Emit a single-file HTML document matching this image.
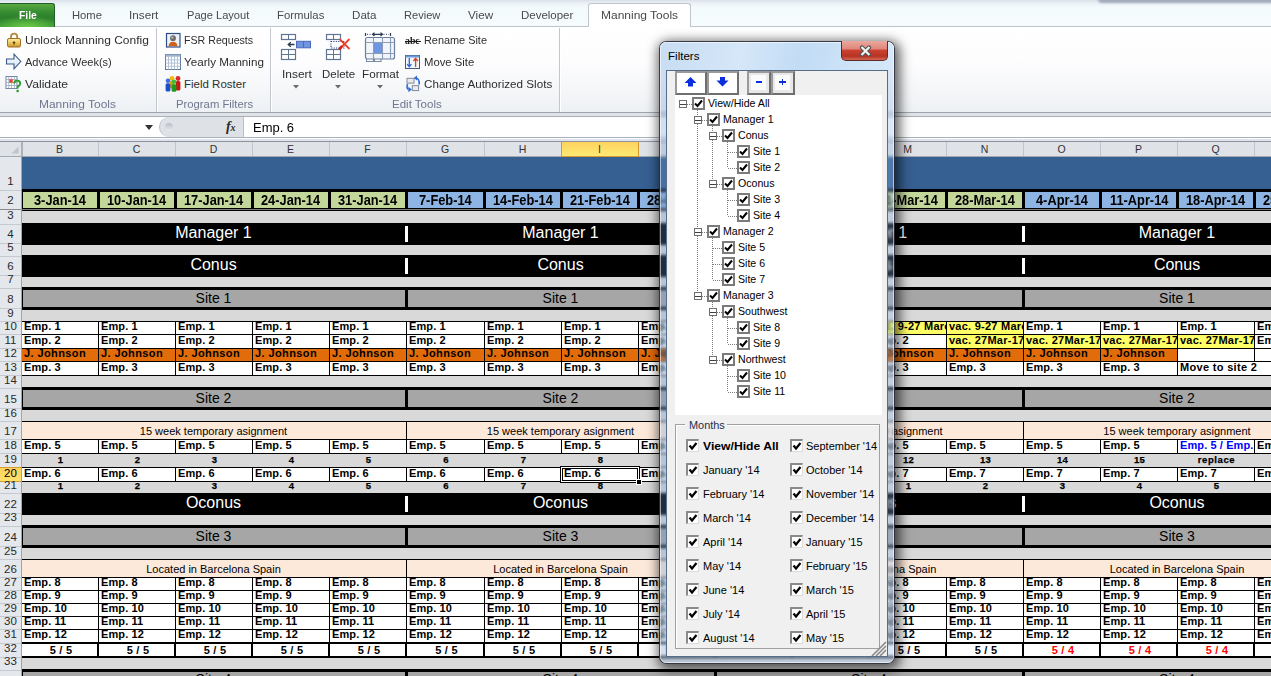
<!DOCTYPE html><html><head><meta charset="utf-8"><style>
html,body{margin:0;padding:0;width:1271px;height:676px;overflow:hidden;background:#fff;}
body{position:relative;font-family:"Liberation Sans", sans-serif;}
div{position:absolute;box-sizing:border-box;}
svg{position:absolute;}
</style></head><body>
<div style="left:22px;top:157px;width:1249px;height:32px;background:#366092;"></div>
<div style="left:22px;top:189px;width:1249px;height:22px;background:#000;"></div>
<div style="left:23px;top:192px;width:74px;height:16px;background:#c4d79b;"></div>
<div style="left:33.80828124999999px;top:192.10px;font-size:14px;line-height:16.1px;font-weight:700;color:#000;white-space:pre;transform:scaleX(0.9150);transform-origin:0 0;">3-Jan-14</div>
<div style="left:100px;top:192px;width:74px;height:16px;background:#c4d79b;"></div>
<div style="left:107.248359375px;top:192.10px;font-size:14px;line-height:16.1px;font-weight:700;color:#000;white-space:pre;transform:scaleX(0.9150);transform-origin:0 0;">10-Jan-14</div>
<div style="left:177px;top:192px;width:74px;height:16px;background:#c4d79b;"></div>
<div style="left:184.248359375px;top:192.10px;font-size:14px;line-height:16.1px;font-weight:700;color:#000;white-space:pre;transform:scaleX(0.9150);transform-origin:0 0;">17-Jan-14</div>
<div style="left:254px;top:192px;width:74px;height:16px;background:#c4d79b;"></div>
<div style="left:261.248359375px;top:192.10px;font-size:14px;line-height:16.1px;font-weight:700;color:#000;white-space:pre;transform:scaleX(0.9150);transform-origin:0 0;">24-Jan-14</div>
<div style="left:331px;top:192px;width:74px;height:16px;background:#c4d79b;"></div>
<div style="left:338.248359375px;top:192.10px;font-size:14px;line-height:16.1px;font-weight:700;color:#000;white-space:pre;transform:scaleX(0.9150);transform-origin:0 0;">31-Jan-14</div>
<div style="left:408px;top:192px;width:75px;height:16px;background:#8db4e2;"></div>
<div style="left:418.9580078125px;top:192.10px;font-size:14px;line-height:16.1px;font-weight:700;color:#000;white-space:pre;transform:scaleX(0.9150);transform-origin:0 0;">7-Feb-14</div>
<div style="left:486px;top:192px;width:74px;height:16px;background:#8db4e2;"></div>
<div style="left:492.89808593749996px;top:192.10px;font-size:14px;line-height:16.1px;font-weight:700;color:#000;white-space:pre;transform:scaleX(0.9150);transform-origin:0 0;">14-Feb-14</div>
<div style="left:563px;top:192px;width:74px;height:16px;background:#8db4e2;"></div>
<div style="left:569.8980859374999px;top:192.10px;font-size:14px;line-height:16.1px;font-weight:700;color:#000;white-space:pre;transform:scaleX(0.9150);transform-origin:0 0;">21-Feb-14</div>
<div style="left:640px;top:192px;width:74px;height:16px;background:#8db4e2;"></div>
<div style="left:646.8980859374999px;top:192.10px;font-size:14px;line-height:16.1px;font-weight:700;color:#000;white-space:pre;transform:scaleX(0.9150);transform-origin:0 0;">28-Feb-14</div>
<div style="left:717px;top:192px;width:74px;height:16px;background:#c4d79b;"></div>
<div style="left:727.4508593749999px;top:192.10px;font-size:14px;line-height:16.1px;font-weight:700;color:#000;white-space:pre;transform:scaleX(0.9150);transform-origin:0 0;">7-Mar-14</div>
<div style="left:794px;top:192px;width:74px;height:16px;background:#c4d79b;"></div>
<div style="left:800.8909375px;top:192.10px;font-size:14px;line-height:16.1px;font-weight:700;color:#000;white-space:pre;transform:scaleX(0.9150);transform-origin:0 0;">14-Mar-14</div>
<div style="left:871px;top:192px;width:74px;height:16px;background:#c4d79b;"></div>
<div style="left:877.8909375px;top:192.10px;font-size:14px;line-height:16.1px;font-weight:700;color:#000;white-space:pre;transform:scaleX(0.9150);transform-origin:0 0;">21-Mar-14</div>
<div style="left:948px;top:192px;width:74px;height:16px;background:#c4d79b;"></div>
<div style="left:954.8909375px;top:192.10px;font-size:14px;line-height:16.1px;font-weight:700;color:#000;white-space:pre;transform:scaleX(0.9150);transform-origin:0 0;">28-Mar-14</div>
<div style="left:1025px;top:192px;width:74px;height:16px;background:#8db4e2;"></div>
<div style="left:1035.8154296875px;top:192.10px;font-size:14px;line-height:16.1px;font-weight:700;color:#000;white-space:pre;transform:scaleX(0.9150);transform-origin:0 0;">4-Apr-14</div>
<div style="left:1102px;top:192px;width:74px;height:16px;background:#8db4e2;"></div>
<div style="left:1109.60578125px;top:192.10px;font-size:14px;line-height:16.1px;font-weight:700;color:#000;white-space:pre;transform:scaleX(0.9150);transform-origin:0 0;">11-Apr-14</div>
<div style="left:1179px;top:192px;width:74px;height:16px;background:#8db4e2;"></div>
<div style="left:1186.248359375px;top:192.10px;font-size:14px;line-height:16.1px;font-weight:700;color:#000;white-space:pre;transform:scaleX(0.9150);transform-origin:0 0;">18-Apr-14</div>
<div style="left:1256px;top:192px;width:74px;height:16px;background:#8db4e2;"></div>
<div style="left:1263.248359375px;top:192.10px;font-size:14px;line-height:16.1px;font-weight:700;color:#000;white-space:pre;transform:scaleX(0.9150);transform-origin:0 0;">25-Apr-14</div>
<div style="left:0px;top:209px;width:1271px;height:1px;background:#7a7a7a;"></div>
<div style="left:22px;top:211px;width:1249px;height:12px;background:#d9d9d9;"></div>
<div style="left:22px;top:245px;width:1249px;height:10px;background:#d9d9d9;"></div>
<div style="left:22px;top:277px;width:1249px;height:10px;background:#d9d9d9;"></div>
<div style="left:22px;top:310px;width:1249px;height:11px;background:#d9d9d9;"></div>
<div style="left:22px;top:375px;width:1249px;height:12px;background:#d9d9d9;"></div>
<div style="left:22px;top:410px;width:1249px;height:11px;background:#d9d9d9;"></div>
<div style="left:22px;top:453px;width:1249px;height:14px;background:#d9d9d9;"></div>
<div style="left:22px;top:482px;width:1249px;height:11px;background:#d9d9d9;"></div>
<div style="left:22px;top:515px;width:1249px;height:10px;background:#d9d9d9;"></div>
<div style="left:22px;top:548px;width:1249px;height:11px;background:#d9d9d9;"></div>
<div style="left:22px;top:658px;width:1249px;height:11px;background:#d9d9d9;"></div>
<div style="left:22px;top:223px;width:1249px;height:22px;background:#000;"></div>
<div style="left:21px;top:224.26px;font-size:16px;line-height:18.4px;font-weight:400;color:#fff;white-space:pre;width:385px;text-align:center;">Manager 1</div>
<div style="left:406px;top:224.26px;font-size:16px;line-height:18.4px;font-weight:400;color:#fff;white-space:pre;width:309px;text-align:center;">Manager 1</div>
<div style="left:405px;top:226px;width:3px;height:16px;background:#fff;"></div>
<div style="left:715px;top:224.26px;font-size:16px;line-height:18.4px;font-weight:400;color:#fff;white-space:pre;width:308px;text-align:center;">Manager 1</div>
<div style="left:714px;top:226px;width:3px;height:16px;background:#fff;"></div>
<div style="left:1023px;top:224.26px;font-size:16px;line-height:18.4px;font-weight:400;color:#fff;white-space:pre;width:308px;text-align:center;">Manager 1</div>
<div style="left:1022px;top:226px;width:3px;height:16px;background:#fff;"></div>
<div style="left:22px;top:255px;width:1249px;height:22px;background:#000;"></div>
<div style="left:21px;top:256.26px;font-size:16px;line-height:18.4px;font-weight:400;color:#fff;white-space:pre;width:385px;text-align:center;">Conus</div>
<div style="left:406px;top:256.26px;font-size:16px;line-height:18.4px;font-weight:400;color:#fff;white-space:pre;width:309px;text-align:center;">Conus</div>
<div style="left:405px;top:258px;width:3px;height:16px;background:#fff;"></div>
<div style="left:715px;top:256.26px;font-size:16px;line-height:18.4px;font-weight:400;color:#fff;white-space:pre;width:308px;text-align:center;">Conus</div>
<div style="left:714px;top:258px;width:3px;height:16px;background:#fff;"></div>
<div style="left:1023px;top:256.26px;font-size:16px;line-height:18.4px;font-weight:400;color:#fff;white-space:pre;width:308px;text-align:center;">Conus</div>
<div style="left:1022px;top:258px;width:3px;height:16px;background:#fff;"></div>
<div style="left:22px;top:493px;width:1249px;height:22px;background:#000;"></div>
<div style="left:21px;top:494.26px;font-size:16px;line-height:18.4px;font-weight:400;color:#fff;white-space:pre;width:385px;text-align:center;">Oconus</div>
<div style="left:406px;top:494.26px;font-size:16px;line-height:18.4px;font-weight:400;color:#fff;white-space:pre;width:309px;text-align:center;">Oconus</div>
<div style="left:405px;top:496px;width:3px;height:16px;background:#fff;"></div>
<div style="left:715px;top:494.26px;font-size:16px;line-height:18.4px;font-weight:400;color:#fff;white-space:pre;width:308px;text-align:center;">Oconus</div>
<div style="left:714px;top:496px;width:3px;height:16px;background:#fff;"></div>
<div style="left:1023px;top:494.26px;font-size:16px;line-height:18.4px;font-weight:400;color:#fff;white-space:pre;width:308px;text-align:center;">Oconus</div>
<div style="left:1022px;top:496px;width:3px;height:16px;background:#fff;"></div>
<div style="left:22px;top:287px;width:1249px;height:23px;background:#000;"></div>
<div style="left:23px;top:290px;width:382px;height:17px;background:#a6a6a6;"></div>
<div style="left:21px;top:290.10px;font-size:14px;line-height:16.1px;font-weight:400;color:#000;white-space:pre;width:385px;text-align:center;">Site 1</div>
<div style="left:408px;top:290px;width:306px;height:17px;background:#a6a6a6;"></div>
<div style="left:406px;top:290.10px;font-size:14px;line-height:16.1px;font-weight:400;color:#000;white-space:pre;width:309px;text-align:center;">Site 1</div>
<div style="left:717px;top:290px;width:305px;height:17px;background:#a6a6a6;"></div>
<div style="left:715px;top:290.10px;font-size:14px;line-height:16.1px;font-weight:400;color:#000;white-space:pre;width:308px;text-align:center;">Site 1</div>
<div style="left:1025px;top:290px;width:305px;height:17px;background:#a6a6a6;"></div>
<div style="left:1023px;top:290.10px;font-size:14px;line-height:16.1px;font-weight:400;color:#000;white-space:pre;width:308px;text-align:center;">Site 1</div>
<div style="left:22px;top:387px;width:1249px;height:23px;background:#000;"></div>
<div style="left:23px;top:390px;width:382px;height:17px;background:#a6a6a6;"></div>
<div style="left:21px;top:390.10px;font-size:14px;line-height:16.1px;font-weight:400;color:#000;white-space:pre;width:385px;text-align:center;">Site 2</div>
<div style="left:408px;top:390px;width:306px;height:17px;background:#a6a6a6;"></div>
<div style="left:406px;top:390.10px;font-size:14px;line-height:16.1px;font-weight:400;color:#000;white-space:pre;width:309px;text-align:center;">Site 2</div>
<div style="left:717px;top:390px;width:305px;height:17px;background:#a6a6a6;"></div>
<div style="left:715px;top:390.10px;font-size:14px;line-height:16.1px;font-weight:400;color:#000;white-space:pre;width:308px;text-align:center;">Site 2</div>
<div style="left:1025px;top:390px;width:305px;height:17px;background:#a6a6a6;"></div>
<div style="left:1023px;top:390.10px;font-size:14px;line-height:16.1px;font-weight:400;color:#000;white-space:pre;width:308px;text-align:center;">Site 2</div>
<div style="left:22px;top:525px;width:1249px;height:23px;background:#000;"></div>
<div style="left:23px;top:528px;width:382px;height:17px;background:#a6a6a6;"></div>
<div style="left:21px;top:528.10px;font-size:14px;line-height:16.1px;font-weight:400;color:#000;white-space:pre;width:385px;text-align:center;">Site 3</div>
<div style="left:408px;top:528px;width:306px;height:17px;background:#a6a6a6;"></div>
<div style="left:406px;top:528.10px;font-size:14px;line-height:16.1px;font-weight:400;color:#000;white-space:pre;width:309px;text-align:center;">Site 3</div>
<div style="left:717px;top:528px;width:305px;height:17px;background:#a6a6a6;"></div>
<div style="left:715px;top:528.10px;font-size:14px;line-height:16.1px;font-weight:400;color:#000;white-space:pre;width:308px;text-align:center;">Site 3</div>
<div style="left:1025px;top:528px;width:305px;height:17px;background:#a6a6a6;"></div>
<div style="left:1023px;top:528.10px;font-size:14px;line-height:16.1px;font-weight:400;color:#000;white-space:pre;width:308px;text-align:center;">Site 3</div>
<div style="left:22px;top:669px;width:1249px;height:23px;background:#000;"></div>
<div style="left:23px;top:672px;width:382px;height:17px;background:#a6a6a6;"></div>
<div style="left:21px;top:671.10px;font-size:14px;line-height:16.1px;font-weight:400;color:#000;white-space:pre;width:385px;text-align:center;">Site 4</div>
<div style="left:408px;top:672px;width:306px;height:17px;background:#a6a6a6;"></div>
<div style="left:406px;top:671.10px;font-size:14px;line-height:16.1px;font-weight:400;color:#000;white-space:pre;width:309px;text-align:center;">Site 4</div>
<div style="left:717px;top:672px;width:305px;height:17px;background:#a6a6a6;"></div>
<div style="left:715px;top:671.10px;font-size:14px;line-height:16.1px;font-weight:400;color:#000;white-space:pre;width:308px;text-align:center;">Site 4</div>
<div style="left:1025px;top:672px;width:305px;height:17px;background:#a6a6a6;"></div>
<div style="left:1023px;top:671.10px;font-size:14px;line-height:16.1px;font-weight:400;color:#000;white-space:pre;width:308px;text-align:center;">Site 4</div>
<div style="left:22px;top:421px;width:1249px;height:19px;background:#000;"></div>
<div style="left:22px;top:422px;width:384px;height:17px;background:#fde9d9;"></div>
<div style="left:21px;top:424.86px;font-size:11px;line-height:12.65px;font-weight:400;color:#000;white-space:pre;width:385px;text-align:center;">15 week temporary asignment</div>
<div style="left:407px;top:422px;width:308px;height:17px;background:#fde9d9;"></div>
<div style="left:406px;top:424.86px;font-size:11px;line-height:12.65px;font-weight:400;color:#000;white-space:pre;width:309px;text-align:center;">15 week temporary asignment</div>
<div style="left:716px;top:422px;width:307px;height:17px;background:#fde9d9;"></div>
<div style="left:715px;top:424.86px;font-size:11px;line-height:12.65px;font-weight:400;color:#000;white-space:pre;width:308px;text-align:center;">15 week temporary asignment</div>
<div style="left:1024px;top:422px;width:307px;height:17px;background:#fde9d9;"></div>
<div style="left:1023px;top:424.86px;font-size:11px;line-height:12.65px;font-weight:400;color:#000;white-space:pre;width:308px;text-align:center;">15 week temporary asignment</div>
<div style="left:22px;top:559px;width:1249px;height:19px;background:#000;"></div>
<div style="left:22px;top:560px;width:384px;height:17px;background:#fde9d9;"></div>
<div style="left:21px;top:562.86px;font-size:11px;line-height:12.65px;font-weight:400;color:#000;white-space:pre;width:385px;text-align:center;">Located in Barcelona Spain</div>
<div style="left:407px;top:560px;width:308px;height:17px;background:#fde9d9;"></div>
<div style="left:406px;top:562.86px;font-size:11px;line-height:12.65px;font-weight:400;color:#000;white-space:pre;width:309px;text-align:center;">Located in Barcelona Spain</div>
<div style="left:716px;top:560px;width:307px;height:17px;background:#fde9d9;"></div>
<div style="left:715px;top:562.86px;font-size:11px;line-height:12.65px;font-weight:400;color:#000;white-space:pre;width:308px;text-align:center;">Located in Barcelona Spain</div>
<div style="left:1024px;top:560px;width:307px;height:17px;background:#fde9d9;"></div>
<div style="left:1023px;top:562.86px;font-size:11px;line-height:12.65px;font-weight:400;color:#000;white-space:pre;width:308px;text-align:center;">Located in Barcelona Spain</div>
<div style="left:21px;top:321px;width:1250px;height:55px;background:#000;"></div>
<div style="left:22px;top:322px;width:76px;height:12px;background:#fff;"></div>
<div style="left:99px;top:322px;width:76px;height:12px;background:#fff;"></div>
<div style="left:176px;top:322px;width:76px;height:12px;background:#fff;"></div>
<div style="left:253px;top:322px;width:76px;height:12px;background:#fff;"></div>
<div style="left:330px;top:322px;width:76px;height:12px;background:#fff;"></div>
<div style="left:407px;top:322px;width:77px;height:12px;background:#fff;"></div>
<div style="left:485px;top:322px;width:76px;height:12px;background:#fff;"></div>
<div style="left:562px;top:322px;width:76px;height:12px;background:#fff;"></div>
<div style="left:639px;top:322px;width:76px;height:12px;background:#fff;"></div>
<div style="left:716px;top:322px;width:76px;height:12px;background:#fff;"></div>
<div style="left:793px;top:322px;width:76px;height:12px;background:#fff;"></div>
<div style="left:870px;top:322px;width:76px;height:12px;background:#ffff66;"></div>
<div style="left:947px;top:322px;width:76px;height:12px;background:#ffff66;"></div>
<div style="left:1024px;top:322px;width:76px;height:12px;background:#fff;"></div>
<div style="left:1101px;top:322px;width:76px;height:12px;background:#fff;"></div>
<div style="left:1178px;top:322px;width:76px;height:12px;background:#fff;"></div>
<div style="left:1255px;top:322px;width:76px;height:12px;background:#fff;"></div>
<div style="left:22px;top:335px;width:76px;height:13px;background:#fff;"></div>
<div style="left:99px;top:335px;width:76px;height:13px;background:#fff;"></div>
<div style="left:176px;top:335px;width:76px;height:13px;background:#fff;"></div>
<div style="left:253px;top:335px;width:76px;height:13px;background:#fff;"></div>
<div style="left:330px;top:335px;width:76px;height:13px;background:#fff;"></div>
<div style="left:407px;top:335px;width:77px;height:13px;background:#fff;"></div>
<div style="left:485px;top:335px;width:76px;height:13px;background:#fff;"></div>
<div style="left:562px;top:335px;width:76px;height:13px;background:#fff;"></div>
<div style="left:639px;top:335px;width:76px;height:13px;background:#fff;"></div>
<div style="left:716px;top:335px;width:76px;height:13px;background:#fff;"></div>
<div style="left:793px;top:335px;width:76px;height:13px;background:#fff;"></div>
<div style="left:870px;top:335px;width:76px;height:13px;background:#fff;"></div>
<div style="left:947px;top:335px;width:76px;height:13px;background:#ffff66;"></div>
<div style="left:1024px;top:335px;width:76px;height:13px;background:#ffff66;"></div>
<div style="left:1101px;top:335px;width:76px;height:13px;background:#ffff66;"></div>
<div style="left:1178px;top:335px;width:76px;height:13px;background:#ffff66;"></div>
<div style="left:1255px;top:335px;width:76px;height:13px;background:#fff;"></div>
<div style="left:22px;top:349px;width:76px;height:12px;background:#e26b0a;"></div>
<div style="left:99px;top:349px;width:76px;height:12px;background:#e26b0a;"></div>
<div style="left:176px;top:349px;width:76px;height:12px;background:#e26b0a;"></div>
<div style="left:253px;top:349px;width:76px;height:12px;background:#e26b0a;"></div>
<div style="left:330px;top:349px;width:76px;height:12px;background:#e26b0a;"></div>
<div style="left:407px;top:349px;width:77px;height:12px;background:#e26b0a;"></div>
<div style="left:485px;top:349px;width:76px;height:12px;background:#e26b0a;"></div>
<div style="left:562px;top:349px;width:76px;height:12px;background:#e26b0a;"></div>
<div style="left:639px;top:349px;width:76px;height:12px;background:#e26b0a;"></div>
<div style="left:716px;top:349px;width:76px;height:12px;background:#e26b0a;"></div>
<div style="left:793px;top:349px;width:76px;height:12px;background:#e26b0a;"></div>
<div style="left:870px;top:349px;width:76px;height:12px;background:#e26b0a;"></div>
<div style="left:947px;top:349px;width:76px;height:12px;background:#e26b0a;"></div>
<div style="left:1024px;top:349px;width:76px;height:12px;background:#e26b0a;"></div>
<div style="left:1101px;top:349px;width:76px;height:12px;background:#e26b0a;"></div>
<div style="left:1178px;top:349px;width:76px;height:12px;background:#fff;"></div>
<div style="left:1255px;top:349px;width:76px;height:12px;background:#fff;"></div>
<div style="left:22px;top:362px;width:76px;height:13px;background:#fff;"></div>
<div style="left:99px;top:362px;width:76px;height:13px;background:#fff;"></div>
<div style="left:176px;top:362px;width:76px;height:13px;background:#fff;"></div>
<div style="left:253px;top:362px;width:76px;height:13px;background:#fff;"></div>
<div style="left:330px;top:362px;width:76px;height:13px;background:#fff;"></div>
<div style="left:407px;top:362px;width:77px;height:13px;background:#fff;"></div>
<div style="left:485px;top:362px;width:76px;height:13px;background:#fff;"></div>
<div style="left:562px;top:362px;width:76px;height:13px;background:#fff;"></div>
<div style="left:639px;top:362px;width:76px;height:13px;background:#fff;"></div>
<div style="left:716px;top:362px;width:76px;height:13px;background:#fff;"></div>
<div style="left:793px;top:362px;width:76px;height:13px;background:#fff;"></div>
<div style="left:870px;top:362px;width:76px;height:13px;background:#fff;"></div>
<div style="left:947px;top:362px;width:76px;height:13px;background:#fff;"></div>
<div style="left:1024px;top:362px;width:76px;height:13px;background:#fff;"></div>
<div style="left:1101px;top:362px;width:76px;height:13px;background:#fff;"></div>
<div style="left:1178px;top:362px;width:77px;height:13px;background:#fff;"></div>
<div style="left:1255px;top:362px;width:76px;height:13px;background:#fff;"></div>
<div style="left:22px;top:316px;width:76px;height:18px;overflow:hidden"><div style="left:2px;top:3.86px;font-size:11px;line-height:12.65px;font-weight:700;color:#000;white-space:pre;letter-spacing:0.1px">Emp. 1</div></div>
<div style="left:99px;top:316px;width:76px;height:18px;overflow:hidden"><div style="left:2px;top:3.86px;font-size:11px;line-height:12.65px;font-weight:700;color:#000;white-space:pre;letter-spacing:0.1px">Emp. 1</div></div>
<div style="left:176px;top:316px;width:76px;height:18px;overflow:hidden"><div style="left:2px;top:3.86px;font-size:11px;line-height:12.65px;font-weight:700;color:#000;white-space:pre;letter-spacing:0.1px">Emp. 1</div></div>
<div style="left:253px;top:316px;width:76px;height:18px;overflow:hidden"><div style="left:2px;top:3.86px;font-size:11px;line-height:12.65px;font-weight:700;color:#000;white-space:pre;letter-spacing:0.1px">Emp. 1</div></div>
<div style="left:330px;top:316px;width:76px;height:18px;overflow:hidden"><div style="left:2px;top:3.86px;font-size:11px;line-height:12.65px;font-weight:700;color:#000;white-space:pre;letter-spacing:0.1px">Emp. 1</div></div>
<div style="left:407px;top:316px;width:77px;height:18px;overflow:hidden"><div style="left:2px;top:3.86px;font-size:11px;line-height:12.65px;font-weight:700;color:#000;white-space:pre;letter-spacing:0.1px">Emp. 1</div></div>
<div style="left:485px;top:316px;width:76px;height:18px;overflow:hidden"><div style="left:2px;top:3.86px;font-size:11px;line-height:12.65px;font-weight:700;color:#000;white-space:pre;letter-spacing:0.1px">Emp. 1</div></div>
<div style="left:562px;top:316px;width:76px;height:18px;overflow:hidden"><div style="left:2px;top:3.86px;font-size:11px;line-height:12.65px;font-weight:700;color:#000;white-space:pre;letter-spacing:0.1px">Emp. 1</div></div>
<div style="left:639px;top:316px;width:76px;height:18px;overflow:hidden"><div style="left:2px;top:3.86px;font-size:11px;line-height:12.65px;font-weight:700;color:#000;white-space:pre;letter-spacing:0.1px">Emp. 1</div></div>
<div style="left:716px;top:316px;width:76px;height:18px;overflow:hidden"><div style="left:2px;top:3.86px;font-size:11px;line-height:12.65px;font-weight:700;color:#000;white-space:pre;letter-spacing:0.1px">Emp. 1</div></div>
<div style="left:793px;top:316px;width:76px;height:18px;overflow:hidden"><div style="left:2px;top:3.86px;font-size:11px;line-height:12.65px;font-weight:700;color:#000;white-space:pre;letter-spacing:0.1px">Emp. 1</div></div>
<div style="left:870px;top:316px;width:76px;height:18px;overflow:hidden"><div style="left:2px;top:3.86px;font-size:11px;line-height:12.65px;font-weight:700;color:#000;white-space:pre;letter-spacing:0.25px">vac. 9-27 March</div></div>
<div style="left:947px;top:316px;width:76px;height:18px;overflow:hidden"><div style="left:2px;top:3.86px;font-size:11px;line-height:12.65px;font-weight:700;color:#000;white-space:pre;letter-spacing:0.25px">vac. 9-27 March</div></div>
<div style="left:1024px;top:316px;width:76px;height:18px;overflow:hidden"><div style="left:2px;top:3.86px;font-size:11px;line-height:12.65px;font-weight:700;color:#000;white-space:pre;letter-spacing:0.1px">Emp. 1</div></div>
<div style="left:1101px;top:316px;width:76px;height:18px;overflow:hidden"><div style="left:2px;top:3.86px;font-size:11px;line-height:12.65px;font-weight:700;color:#000;white-space:pre;letter-spacing:0.1px">Emp. 1</div></div>
<div style="left:1178px;top:316px;width:76px;height:18px;overflow:hidden"><div style="left:2px;top:3.86px;font-size:11px;line-height:12.65px;font-weight:700;color:#000;white-space:pre;letter-spacing:0.1px">Emp. 1</div></div>
<div style="left:1255px;top:316px;width:76px;height:18px;overflow:hidden"><div style="left:2px;top:3.86px;font-size:11px;line-height:12.65px;font-weight:700;color:#000;white-space:pre;letter-spacing:0.1px">Emp. 1</div></div>
<div style="left:22px;top:330px;width:76px;height:18px;overflow:hidden"><div style="left:2px;top:3.86px;font-size:11px;line-height:12.65px;font-weight:700;color:#000;white-space:pre;letter-spacing:0.1px">Emp. 2</div></div>
<div style="left:99px;top:330px;width:76px;height:18px;overflow:hidden"><div style="left:2px;top:3.86px;font-size:11px;line-height:12.65px;font-weight:700;color:#000;white-space:pre;letter-spacing:0.1px">Emp. 2</div></div>
<div style="left:176px;top:330px;width:76px;height:18px;overflow:hidden"><div style="left:2px;top:3.86px;font-size:11px;line-height:12.65px;font-weight:700;color:#000;white-space:pre;letter-spacing:0.1px">Emp. 2</div></div>
<div style="left:253px;top:330px;width:76px;height:18px;overflow:hidden"><div style="left:2px;top:3.86px;font-size:11px;line-height:12.65px;font-weight:700;color:#000;white-space:pre;letter-spacing:0.1px">Emp. 2</div></div>
<div style="left:330px;top:330px;width:76px;height:18px;overflow:hidden"><div style="left:2px;top:3.86px;font-size:11px;line-height:12.65px;font-weight:700;color:#000;white-space:pre;letter-spacing:0.1px">Emp. 2</div></div>
<div style="left:407px;top:330px;width:77px;height:18px;overflow:hidden"><div style="left:2px;top:3.86px;font-size:11px;line-height:12.65px;font-weight:700;color:#000;white-space:pre;letter-spacing:0.1px">Emp. 2</div></div>
<div style="left:485px;top:330px;width:76px;height:18px;overflow:hidden"><div style="left:2px;top:3.86px;font-size:11px;line-height:12.65px;font-weight:700;color:#000;white-space:pre;letter-spacing:0.1px">Emp. 2</div></div>
<div style="left:562px;top:330px;width:76px;height:18px;overflow:hidden"><div style="left:2px;top:3.86px;font-size:11px;line-height:12.65px;font-weight:700;color:#000;white-space:pre;letter-spacing:0.1px">Emp. 2</div></div>
<div style="left:639px;top:330px;width:76px;height:18px;overflow:hidden"><div style="left:2px;top:3.86px;font-size:11px;line-height:12.65px;font-weight:700;color:#000;white-space:pre;letter-spacing:0.1px">Emp. 2</div></div>
<div style="left:716px;top:330px;width:76px;height:18px;overflow:hidden"><div style="left:2px;top:3.86px;font-size:11px;line-height:12.65px;font-weight:700;color:#000;white-space:pre;letter-spacing:0.1px">Emp. 2</div></div>
<div style="left:793px;top:330px;width:76px;height:18px;overflow:hidden"><div style="left:2px;top:3.86px;font-size:11px;line-height:12.65px;font-weight:700;color:#000;white-space:pre;letter-spacing:0.1px">Emp. 2</div></div>
<div style="left:870px;top:330px;width:76px;height:18px;overflow:hidden"><div style="left:2px;top:3.86px;font-size:11px;line-height:12.65px;font-weight:700;color:#000;white-space:pre;letter-spacing:0.1px">Emp. 2</div></div>
<div style="left:947px;top:330px;width:76px;height:18px;overflow:hidden"><div style="left:2px;top:3.86px;font-size:11px;line-height:12.65px;font-weight:700;color:#000;white-space:pre;letter-spacing:0.25px">vac. 27Mar-17Apr</div></div>
<div style="left:1024px;top:330px;width:76px;height:18px;overflow:hidden"><div style="left:2px;top:3.86px;font-size:11px;line-height:12.65px;font-weight:700;color:#000;white-space:pre;letter-spacing:0.25px">vac. 27Mar-17Apr</div></div>
<div style="left:1101px;top:330px;width:76px;height:18px;overflow:hidden"><div style="left:2px;top:3.86px;font-size:11px;line-height:12.65px;font-weight:700;color:#000;white-space:pre;letter-spacing:0.25px">vac. 27Mar-17Apr</div></div>
<div style="left:1178px;top:330px;width:76px;height:18px;overflow:hidden"><div style="left:2px;top:3.86px;font-size:11px;line-height:12.65px;font-weight:700;color:#000;white-space:pre;letter-spacing:0.25px">vac. 27Mar-17Apr</div></div>
<div style="left:1255px;top:330px;width:76px;height:18px;overflow:hidden"><div style="left:2px;top:3.86px;font-size:11px;line-height:12.65px;font-weight:700;color:#000;white-space:pre;letter-spacing:0.1px">Emp. 2</div></div>
<div style="left:22px;top:343px;width:76px;height:18px;overflow:hidden"><div style="left:2px;top:3.86px;font-size:11px;line-height:12.65px;font-weight:700;color:#000;white-space:pre;letter-spacing:0.4px">J. Johnson</div></div>
<div style="left:99px;top:343px;width:76px;height:18px;overflow:hidden"><div style="left:2px;top:3.86px;font-size:11px;line-height:12.65px;font-weight:700;color:#000;white-space:pre;letter-spacing:0.4px">J. Johnson</div></div>
<div style="left:176px;top:343px;width:76px;height:18px;overflow:hidden"><div style="left:2px;top:3.86px;font-size:11px;line-height:12.65px;font-weight:700;color:#000;white-space:pre;letter-spacing:0.4px">J. Johnson</div></div>
<div style="left:253px;top:343px;width:76px;height:18px;overflow:hidden"><div style="left:2px;top:3.86px;font-size:11px;line-height:12.65px;font-weight:700;color:#000;white-space:pre;letter-spacing:0.4px">J. Johnson</div></div>
<div style="left:330px;top:343px;width:76px;height:18px;overflow:hidden"><div style="left:2px;top:3.86px;font-size:11px;line-height:12.65px;font-weight:700;color:#000;white-space:pre;letter-spacing:0.4px">J. Johnson</div></div>
<div style="left:407px;top:343px;width:77px;height:18px;overflow:hidden"><div style="left:2px;top:3.86px;font-size:11px;line-height:12.65px;font-weight:700;color:#000;white-space:pre;letter-spacing:0.4px">J. Johnson</div></div>
<div style="left:485px;top:343px;width:76px;height:18px;overflow:hidden"><div style="left:2px;top:3.86px;font-size:11px;line-height:12.65px;font-weight:700;color:#000;white-space:pre;letter-spacing:0.4px">J. Johnson</div></div>
<div style="left:562px;top:343px;width:76px;height:18px;overflow:hidden"><div style="left:2px;top:3.86px;font-size:11px;line-height:12.65px;font-weight:700;color:#000;white-space:pre;letter-spacing:0.4px">J. Johnson</div></div>
<div style="left:639px;top:343px;width:76px;height:18px;overflow:hidden"><div style="left:2px;top:3.86px;font-size:11px;line-height:12.65px;font-weight:700;color:#000;white-space:pre;letter-spacing:0.4px">J. Johnson</div></div>
<div style="left:716px;top:343px;width:76px;height:18px;overflow:hidden"><div style="left:2px;top:3.86px;font-size:11px;line-height:12.65px;font-weight:700;color:#000;white-space:pre;letter-spacing:0.4px">J. Johnson</div></div>
<div style="left:793px;top:343px;width:76px;height:18px;overflow:hidden"><div style="left:2px;top:3.86px;font-size:11px;line-height:12.65px;font-weight:700;color:#000;white-space:pre;letter-spacing:0.4px">J. Johnson</div></div>
<div style="left:870px;top:343px;width:76px;height:18px;overflow:hidden"><div style="left:2px;top:3.86px;font-size:11px;line-height:12.65px;font-weight:700;color:#000;white-space:pre;letter-spacing:0.4px">J. Johnson</div></div>
<div style="left:947px;top:343px;width:76px;height:18px;overflow:hidden"><div style="left:2px;top:3.86px;font-size:11px;line-height:12.65px;font-weight:700;color:#000;white-space:pre;letter-spacing:0.4px">J. Johnson</div></div>
<div style="left:1024px;top:343px;width:76px;height:18px;overflow:hidden"><div style="left:2px;top:3.86px;font-size:11px;line-height:12.65px;font-weight:700;color:#000;white-space:pre;letter-spacing:0.4px">J. Johnson</div></div>
<div style="left:1101px;top:343px;width:76px;height:18px;overflow:hidden"><div style="left:2px;top:3.86px;font-size:11px;line-height:12.65px;font-weight:700;color:#000;white-space:pre;letter-spacing:0.4px">J. Johnson</div></div>
<div style="left:22px;top:357px;width:76px;height:18px;overflow:hidden"><div style="left:2px;top:3.86px;font-size:11px;line-height:12.65px;font-weight:700;color:#000;white-space:pre;letter-spacing:0.1px">Emp. 3</div></div>
<div style="left:99px;top:357px;width:76px;height:18px;overflow:hidden"><div style="left:2px;top:3.86px;font-size:11px;line-height:12.65px;font-weight:700;color:#000;white-space:pre;letter-spacing:0.1px">Emp. 3</div></div>
<div style="left:176px;top:357px;width:76px;height:18px;overflow:hidden"><div style="left:2px;top:3.86px;font-size:11px;line-height:12.65px;font-weight:700;color:#000;white-space:pre;letter-spacing:0.1px">Emp. 3</div></div>
<div style="left:253px;top:357px;width:76px;height:18px;overflow:hidden"><div style="left:2px;top:3.86px;font-size:11px;line-height:12.65px;font-weight:700;color:#000;white-space:pre;letter-spacing:0.1px">Emp. 3</div></div>
<div style="left:330px;top:357px;width:76px;height:18px;overflow:hidden"><div style="left:2px;top:3.86px;font-size:11px;line-height:12.65px;font-weight:700;color:#000;white-space:pre;letter-spacing:0.1px">Emp. 3</div></div>
<div style="left:407px;top:357px;width:77px;height:18px;overflow:hidden"><div style="left:2px;top:3.86px;font-size:11px;line-height:12.65px;font-weight:700;color:#000;white-space:pre;letter-spacing:0.1px">Emp. 3</div></div>
<div style="left:485px;top:357px;width:76px;height:18px;overflow:hidden"><div style="left:2px;top:3.86px;font-size:11px;line-height:12.65px;font-weight:700;color:#000;white-space:pre;letter-spacing:0.1px">Emp. 3</div></div>
<div style="left:562px;top:357px;width:76px;height:18px;overflow:hidden"><div style="left:2px;top:3.86px;font-size:11px;line-height:12.65px;font-weight:700;color:#000;white-space:pre;letter-spacing:0.1px">Emp. 3</div></div>
<div style="left:639px;top:357px;width:76px;height:18px;overflow:hidden"><div style="left:2px;top:3.86px;font-size:11px;line-height:12.65px;font-weight:700;color:#000;white-space:pre;letter-spacing:0.1px">Emp. 3</div></div>
<div style="left:716px;top:357px;width:76px;height:18px;overflow:hidden"><div style="left:2px;top:3.86px;font-size:11px;line-height:12.65px;font-weight:700;color:#000;white-space:pre;letter-spacing:0.1px">Emp. 3</div></div>
<div style="left:793px;top:357px;width:76px;height:18px;overflow:hidden"><div style="left:2px;top:3.86px;font-size:11px;line-height:12.65px;font-weight:700;color:#000;white-space:pre;letter-spacing:0.1px">Emp. 3</div></div>
<div style="left:870px;top:357px;width:76px;height:18px;overflow:hidden"><div style="left:2px;top:3.86px;font-size:11px;line-height:12.65px;font-weight:700;color:#000;white-space:pre;letter-spacing:0.1px">Emp. 3</div></div>
<div style="left:947px;top:357px;width:76px;height:18px;overflow:hidden"><div style="left:2px;top:3.86px;font-size:11px;line-height:12.65px;font-weight:700;color:#000;white-space:pre;letter-spacing:0.1px">Emp. 3</div></div>
<div style="left:1024px;top:357px;width:76px;height:18px;overflow:hidden"><div style="left:2px;top:3.86px;font-size:11px;line-height:12.65px;font-weight:700;color:#000;white-space:pre;letter-spacing:0.1px">Emp. 3</div></div>
<div style="left:1101px;top:357px;width:76px;height:18px;overflow:hidden"><div style="left:2px;top:3.86px;font-size:11px;line-height:12.65px;font-weight:700;color:#000;white-space:pre;letter-spacing:0.1px">Emp. 3</div></div>
<div style="left:1180px;top:360.86px;font-size:11px;line-height:12.65px;font-weight:700;color:#000;white-space:pre;letter-spacing:0.32px;">Move to site 2</div>
<div style="left:21px;top:439px;width:1250px;height:15px;background:#000;"></div>
<div style="left:22px;top:440px;width:76px;height:13px;background:#fff;"></div>
<div style="left:99px;top:440px;width:76px;height:13px;background:#fff;"></div>
<div style="left:176px;top:440px;width:76px;height:13px;background:#fff;"></div>
<div style="left:253px;top:440px;width:76px;height:13px;background:#fff;"></div>
<div style="left:330px;top:440px;width:76px;height:13px;background:#fff;"></div>
<div style="left:407px;top:440px;width:77px;height:13px;background:#fff;"></div>
<div style="left:485px;top:440px;width:76px;height:13px;background:#fff;"></div>
<div style="left:562px;top:440px;width:76px;height:13px;background:#fff;"></div>
<div style="left:639px;top:440px;width:76px;height:13px;background:#fff;"></div>
<div style="left:716px;top:440px;width:76px;height:13px;background:#fff;"></div>
<div style="left:793px;top:440px;width:76px;height:13px;background:#fff;"></div>
<div style="left:870px;top:440px;width:76px;height:13px;background:#fff;"></div>
<div style="left:947px;top:440px;width:76px;height:13px;background:#fff;"></div>
<div style="left:1024px;top:440px;width:76px;height:13px;background:#fff;"></div>
<div style="left:1101px;top:440px;width:76px;height:13px;background:#fff;"></div>
<div style="left:1178px;top:440px;width:76px;height:13px;background:#fff;"></div>
<div style="left:1255px;top:440px;width:76px;height:13px;background:#fff;"></div>
<div style="left:22px;top:435px;width:76px;height:18px;overflow:hidden"><div style="left:2px;top:3.86px;font-size:11px;line-height:12.65px;font-weight:700;color:#000;white-space:pre;letter-spacing:0.1px">Emp. 5</div></div>
<div style="left:99px;top:435px;width:76px;height:18px;overflow:hidden"><div style="left:2px;top:3.86px;font-size:11px;line-height:12.65px;font-weight:700;color:#000;white-space:pre;letter-spacing:0.1px">Emp. 5</div></div>
<div style="left:176px;top:435px;width:76px;height:18px;overflow:hidden"><div style="left:2px;top:3.86px;font-size:11px;line-height:12.65px;font-weight:700;color:#000;white-space:pre;letter-spacing:0.1px">Emp. 5</div></div>
<div style="left:253px;top:435px;width:76px;height:18px;overflow:hidden"><div style="left:2px;top:3.86px;font-size:11px;line-height:12.65px;font-weight:700;color:#000;white-space:pre;letter-spacing:0.1px">Emp. 5</div></div>
<div style="left:330px;top:435px;width:76px;height:18px;overflow:hidden"><div style="left:2px;top:3.86px;font-size:11px;line-height:12.65px;font-weight:700;color:#000;white-space:pre;letter-spacing:0.1px">Emp. 5</div></div>
<div style="left:407px;top:435px;width:77px;height:18px;overflow:hidden"><div style="left:2px;top:3.86px;font-size:11px;line-height:12.65px;font-weight:700;color:#000;white-space:pre;letter-spacing:0.1px">Emp. 5</div></div>
<div style="left:485px;top:435px;width:76px;height:18px;overflow:hidden"><div style="left:2px;top:3.86px;font-size:11px;line-height:12.65px;font-weight:700;color:#000;white-space:pre;letter-spacing:0.1px">Emp. 5</div></div>
<div style="left:562px;top:435px;width:76px;height:18px;overflow:hidden"><div style="left:2px;top:3.86px;font-size:11px;line-height:12.65px;font-weight:700;color:#000;white-space:pre;letter-spacing:0.1px">Emp. 5</div></div>
<div style="left:639px;top:435px;width:76px;height:18px;overflow:hidden"><div style="left:2px;top:3.86px;font-size:11px;line-height:12.65px;font-weight:700;color:#000;white-space:pre;letter-spacing:0.1px">Emp. 5</div></div>
<div style="left:716px;top:435px;width:76px;height:18px;overflow:hidden"><div style="left:2px;top:3.86px;font-size:11px;line-height:12.65px;font-weight:700;color:#000;white-space:pre;letter-spacing:0.1px">Emp. 5</div></div>
<div style="left:793px;top:435px;width:76px;height:18px;overflow:hidden"><div style="left:2px;top:3.86px;font-size:11px;line-height:12.65px;font-weight:700;color:#000;white-space:pre;letter-spacing:0.1px">Emp. 5</div></div>
<div style="left:870px;top:435px;width:76px;height:18px;overflow:hidden"><div style="left:2px;top:3.86px;font-size:11px;line-height:12.65px;font-weight:700;color:#000;white-space:pre;letter-spacing:0.1px">Emp. 5</div></div>
<div style="left:947px;top:435px;width:76px;height:18px;overflow:hidden"><div style="left:2px;top:3.86px;font-size:11px;line-height:12.65px;font-weight:700;color:#000;white-space:pre;letter-spacing:0.1px">Emp. 5</div></div>
<div style="left:1024px;top:435px;width:76px;height:18px;overflow:hidden"><div style="left:2px;top:3.86px;font-size:11px;line-height:12.65px;font-weight:700;color:#000;white-space:pre;letter-spacing:0.1px">Emp. 5</div></div>
<div style="left:1101px;top:435px;width:76px;height:18px;overflow:hidden"><div style="left:2px;top:3.86px;font-size:11px;line-height:12.65px;font-weight:700;color:#000;white-space:pre;letter-spacing:0.1px">Emp. 5</div></div>
<div style="left:1178px;top:435px;width:76px;height:18px;overflow:hidden"><div style="left:2px;top:3.86px;font-size:11px;line-height:12.65px;font-weight:700;color:#0000ff;white-space:pre;letter-spacing:0.1px">Emp. 5 / Emp. 6</div></div>
<div style="left:1255px;top:435px;width:76px;height:18px;overflow:hidden"><div style="left:2px;top:3.86px;font-size:11px;line-height:12.65px;font-weight:700;color:#000;white-space:pre;letter-spacing:0.1px">Emp. 5</div></div>
<div style="left:21px;top:467px;width:1250px;height:15px;background:#000;"></div>
<div style="left:22px;top:468px;width:76px;height:13px;background:#fff;"></div>
<div style="left:99px;top:468px;width:76px;height:13px;background:#fff;"></div>
<div style="left:176px;top:468px;width:76px;height:13px;background:#fff;"></div>
<div style="left:253px;top:468px;width:76px;height:13px;background:#fff;"></div>
<div style="left:330px;top:468px;width:76px;height:13px;background:#fff;"></div>
<div style="left:407px;top:468px;width:77px;height:13px;background:#fff;"></div>
<div style="left:485px;top:468px;width:76px;height:13px;background:#fff;"></div>
<div style="left:562px;top:468px;width:76px;height:13px;background:#fff;"></div>
<div style="left:639px;top:468px;width:76px;height:13px;background:#fff;"></div>
<div style="left:716px;top:468px;width:76px;height:13px;background:#fff;"></div>
<div style="left:793px;top:468px;width:76px;height:13px;background:#fff;"></div>
<div style="left:870px;top:468px;width:76px;height:13px;background:#fff;"></div>
<div style="left:947px;top:468px;width:76px;height:13px;background:#fff;"></div>
<div style="left:1024px;top:468px;width:76px;height:13px;background:#fff;"></div>
<div style="left:1101px;top:468px;width:76px;height:13px;background:#fff;"></div>
<div style="left:1178px;top:468px;width:76px;height:13px;background:#fff;"></div>
<div style="left:1255px;top:468px;width:76px;height:13px;background:#fff;"></div>
<div style="left:22px;top:463px;width:76px;height:18px;overflow:hidden"><div style="left:2px;top:3.86px;font-size:11px;line-height:12.65px;font-weight:700;color:#000;white-space:pre;letter-spacing:0.1px">Emp. 6</div></div>
<div style="left:99px;top:463px;width:76px;height:18px;overflow:hidden"><div style="left:2px;top:3.86px;font-size:11px;line-height:12.65px;font-weight:700;color:#000;white-space:pre;letter-spacing:0.1px">Emp. 6</div></div>
<div style="left:176px;top:463px;width:76px;height:18px;overflow:hidden"><div style="left:2px;top:3.86px;font-size:11px;line-height:12.65px;font-weight:700;color:#000;white-space:pre;letter-spacing:0.1px">Emp. 6</div></div>
<div style="left:253px;top:463px;width:76px;height:18px;overflow:hidden"><div style="left:2px;top:3.86px;font-size:11px;line-height:12.65px;font-weight:700;color:#000;white-space:pre;letter-spacing:0.1px">Emp. 6</div></div>
<div style="left:330px;top:463px;width:76px;height:18px;overflow:hidden"><div style="left:2px;top:3.86px;font-size:11px;line-height:12.65px;font-weight:700;color:#000;white-space:pre;letter-spacing:0.1px">Emp. 6</div></div>
<div style="left:407px;top:463px;width:77px;height:18px;overflow:hidden"><div style="left:2px;top:3.86px;font-size:11px;line-height:12.65px;font-weight:700;color:#000;white-space:pre;letter-spacing:0.1px">Emp. 6</div></div>
<div style="left:485px;top:463px;width:76px;height:18px;overflow:hidden"><div style="left:2px;top:3.86px;font-size:11px;line-height:12.65px;font-weight:700;color:#000;white-space:pre;letter-spacing:0.1px">Emp. 6</div></div>
<div style="left:562px;top:463px;width:76px;height:18px;overflow:hidden"><div style="left:2px;top:3.86px;font-size:11px;line-height:12.65px;font-weight:700;color:#000;white-space:pre;letter-spacing:0.1px">Emp. 6</div></div>
<div style="left:639px;top:463px;width:76px;height:18px;overflow:hidden"><div style="left:2px;top:3.86px;font-size:11px;line-height:12.65px;font-weight:700;color:#000;white-space:pre;letter-spacing:0.1px">Emp. 6</div></div>
<div style="left:716px;top:463px;width:76px;height:18px;overflow:hidden"><div style="left:2px;top:3.86px;font-size:11px;line-height:12.65px;font-weight:700;color:#000;white-space:pre;letter-spacing:0.1px">Emp. 6</div></div>
<div style="left:793px;top:463px;width:76px;height:18px;overflow:hidden"><div style="left:2px;top:3.86px;font-size:11px;line-height:12.65px;font-weight:700;color:#000;white-space:pre;letter-spacing:0.1px">Emp. 6</div></div>
<div style="left:870px;top:463px;width:76px;height:18px;overflow:hidden"><div style="left:2px;top:3.86px;font-size:11px;line-height:12.65px;font-weight:700;color:#000;white-space:pre;letter-spacing:0.1px">Emp. 7</div></div>
<div style="left:947px;top:463px;width:76px;height:18px;overflow:hidden"><div style="left:2px;top:3.86px;font-size:11px;line-height:12.65px;font-weight:700;color:#000;white-space:pre;letter-spacing:0.1px">Emp. 7</div></div>
<div style="left:1024px;top:463px;width:76px;height:18px;overflow:hidden"><div style="left:2px;top:3.86px;font-size:11px;line-height:12.65px;font-weight:700;color:#000;white-space:pre;letter-spacing:0.1px">Emp. 7</div></div>
<div style="left:1101px;top:463px;width:76px;height:18px;overflow:hidden"><div style="left:2px;top:3.86px;font-size:11px;line-height:12.65px;font-weight:700;color:#000;white-space:pre;letter-spacing:0.1px">Emp. 7</div></div>
<div style="left:1178px;top:463px;width:76px;height:18px;overflow:hidden"><div style="left:2px;top:3.86px;font-size:11px;line-height:12.65px;font-weight:700;color:#000;white-space:pre;letter-spacing:0.1px">Emp. 7</div></div>
<div style="left:1255px;top:463px;width:76px;height:18px;overflow:hidden"><div style="left:2px;top:3.86px;font-size:11px;line-height:12.65px;font-weight:700;color:#000;white-space:pre;letter-spacing:0.1px">Emp. 7</div></div>
<div style="left:21px;top:577px;width:1250px;height:66px;background:#000;"></div>
<div style="left:22px;top:578px;width:76px;height:12px;background:#fff;"></div>
<div style="left:99px;top:578px;width:76px;height:12px;background:#fff;"></div>
<div style="left:176px;top:578px;width:76px;height:12px;background:#fff;"></div>
<div style="left:253px;top:578px;width:76px;height:12px;background:#fff;"></div>
<div style="left:330px;top:578px;width:76px;height:12px;background:#fff;"></div>
<div style="left:407px;top:578px;width:77px;height:12px;background:#fff;"></div>
<div style="left:485px;top:578px;width:76px;height:12px;background:#fff;"></div>
<div style="left:562px;top:578px;width:76px;height:12px;background:#fff;"></div>
<div style="left:639px;top:578px;width:76px;height:12px;background:#fff;"></div>
<div style="left:716px;top:578px;width:76px;height:12px;background:#fff;"></div>
<div style="left:793px;top:578px;width:76px;height:12px;background:#fff;"></div>
<div style="left:870px;top:578px;width:76px;height:12px;background:#fff;"></div>
<div style="left:947px;top:578px;width:76px;height:12px;background:#fff;"></div>
<div style="left:1024px;top:578px;width:76px;height:12px;background:#fff;"></div>
<div style="left:1101px;top:578px;width:76px;height:12px;background:#fff;"></div>
<div style="left:1178px;top:578px;width:76px;height:12px;background:#fff;"></div>
<div style="left:1255px;top:578px;width:76px;height:12px;background:#fff;"></div>
<div style="left:22px;top:591px;width:76px;height:12px;background:#fff;"></div>
<div style="left:99px;top:591px;width:76px;height:12px;background:#fff;"></div>
<div style="left:176px;top:591px;width:76px;height:12px;background:#fff;"></div>
<div style="left:253px;top:591px;width:76px;height:12px;background:#fff;"></div>
<div style="left:330px;top:591px;width:76px;height:12px;background:#fff;"></div>
<div style="left:407px;top:591px;width:77px;height:12px;background:#fff;"></div>
<div style="left:485px;top:591px;width:76px;height:12px;background:#fff;"></div>
<div style="left:562px;top:591px;width:76px;height:12px;background:#fff;"></div>
<div style="left:639px;top:591px;width:76px;height:12px;background:#fff;"></div>
<div style="left:716px;top:591px;width:76px;height:12px;background:#fff;"></div>
<div style="left:793px;top:591px;width:76px;height:12px;background:#fff;"></div>
<div style="left:870px;top:591px;width:76px;height:12px;background:#fff;"></div>
<div style="left:947px;top:591px;width:76px;height:12px;background:#fff;"></div>
<div style="left:1024px;top:591px;width:76px;height:12px;background:#fff;"></div>
<div style="left:1101px;top:591px;width:76px;height:12px;background:#fff;"></div>
<div style="left:1178px;top:591px;width:76px;height:12px;background:#fff;"></div>
<div style="left:1255px;top:591px;width:76px;height:12px;background:#fff;"></div>
<div style="left:22px;top:604px;width:76px;height:12px;background:#fff;"></div>
<div style="left:99px;top:604px;width:76px;height:12px;background:#fff;"></div>
<div style="left:176px;top:604px;width:76px;height:12px;background:#fff;"></div>
<div style="left:253px;top:604px;width:76px;height:12px;background:#fff;"></div>
<div style="left:330px;top:604px;width:76px;height:12px;background:#fff;"></div>
<div style="left:407px;top:604px;width:77px;height:12px;background:#fff;"></div>
<div style="left:485px;top:604px;width:76px;height:12px;background:#fff;"></div>
<div style="left:562px;top:604px;width:76px;height:12px;background:#fff;"></div>
<div style="left:639px;top:604px;width:76px;height:12px;background:#fff;"></div>
<div style="left:716px;top:604px;width:76px;height:12px;background:#fff;"></div>
<div style="left:793px;top:604px;width:76px;height:12px;background:#fff;"></div>
<div style="left:870px;top:604px;width:76px;height:12px;background:#fff;"></div>
<div style="left:947px;top:604px;width:76px;height:12px;background:#fff;"></div>
<div style="left:1024px;top:604px;width:76px;height:12px;background:#fff;"></div>
<div style="left:1101px;top:604px;width:76px;height:12px;background:#fff;"></div>
<div style="left:1178px;top:604px;width:76px;height:12px;background:#fff;"></div>
<div style="left:1255px;top:604px;width:76px;height:12px;background:#fff;"></div>
<div style="left:22px;top:617px;width:76px;height:12px;background:#fff;"></div>
<div style="left:99px;top:617px;width:76px;height:12px;background:#fff;"></div>
<div style="left:176px;top:617px;width:76px;height:12px;background:#fff;"></div>
<div style="left:253px;top:617px;width:76px;height:12px;background:#fff;"></div>
<div style="left:330px;top:617px;width:76px;height:12px;background:#fff;"></div>
<div style="left:407px;top:617px;width:77px;height:12px;background:#fff;"></div>
<div style="left:485px;top:617px;width:76px;height:12px;background:#fff;"></div>
<div style="left:562px;top:617px;width:76px;height:12px;background:#fff;"></div>
<div style="left:639px;top:617px;width:76px;height:12px;background:#fff;"></div>
<div style="left:716px;top:617px;width:76px;height:12px;background:#fff;"></div>
<div style="left:793px;top:617px;width:76px;height:12px;background:#fff;"></div>
<div style="left:870px;top:617px;width:76px;height:12px;background:#fff;"></div>
<div style="left:947px;top:617px;width:76px;height:12px;background:#fff;"></div>
<div style="left:1024px;top:617px;width:76px;height:12px;background:#fff;"></div>
<div style="left:1101px;top:617px;width:76px;height:12px;background:#fff;"></div>
<div style="left:1178px;top:617px;width:76px;height:12px;background:#fff;"></div>
<div style="left:1255px;top:617px;width:76px;height:12px;background:#fff;"></div>
<div style="left:22px;top:630px;width:76px;height:12px;background:#fff;"></div>
<div style="left:99px;top:630px;width:76px;height:12px;background:#fff;"></div>
<div style="left:176px;top:630px;width:76px;height:12px;background:#fff;"></div>
<div style="left:253px;top:630px;width:76px;height:12px;background:#fff;"></div>
<div style="left:330px;top:630px;width:76px;height:12px;background:#fff;"></div>
<div style="left:407px;top:630px;width:77px;height:12px;background:#fff;"></div>
<div style="left:485px;top:630px;width:76px;height:12px;background:#fff;"></div>
<div style="left:562px;top:630px;width:76px;height:12px;background:#fff;"></div>
<div style="left:639px;top:630px;width:76px;height:12px;background:#fff;"></div>
<div style="left:716px;top:630px;width:76px;height:12px;background:#fff;"></div>
<div style="left:793px;top:630px;width:76px;height:12px;background:#fff;"></div>
<div style="left:870px;top:630px;width:76px;height:12px;background:#fff;"></div>
<div style="left:947px;top:630px;width:76px;height:12px;background:#fff;"></div>
<div style="left:1024px;top:630px;width:76px;height:12px;background:#fff;"></div>
<div style="left:1101px;top:630px;width:76px;height:12px;background:#fff;"></div>
<div style="left:1178px;top:630px;width:76px;height:12px;background:#fff;"></div>
<div style="left:1255px;top:630px;width:76px;height:12px;background:#fff;"></div>
<div style="left:22px;top:572px;width:76px;height:18px;overflow:hidden"><div style="left:2px;top:3.86px;font-size:11px;line-height:12.65px;font-weight:700;color:#000;white-space:pre;letter-spacing:0.1px">Emp. 8</div></div>
<div style="left:99px;top:572px;width:76px;height:18px;overflow:hidden"><div style="left:2px;top:3.86px;font-size:11px;line-height:12.65px;font-weight:700;color:#000;white-space:pre;letter-spacing:0.1px">Emp. 8</div></div>
<div style="left:176px;top:572px;width:76px;height:18px;overflow:hidden"><div style="left:2px;top:3.86px;font-size:11px;line-height:12.65px;font-weight:700;color:#000;white-space:pre;letter-spacing:0.1px">Emp. 8</div></div>
<div style="left:253px;top:572px;width:76px;height:18px;overflow:hidden"><div style="left:2px;top:3.86px;font-size:11px;line-height:12.65px;font-weight:700;color:#000;white-space:pre;letter-spacing:0.1px">Emp. 8</div></div>
<div style="left:330px;top:572px;width:76px;height:18px;overflow:hidden"><div style="left:2px;top:3.86px;font-size:11px;line-height:12.65px;font-weight:700;color:#000;white-space:pre;letter-spacing:0.1px">Emp. 8</div></div>
<div style="left:407px;top:572px;width:77px;height:18px;overflow:hidden"><div style="left:2px;top:3.86px;font-size:11px;line-height:12.65px;font-weight:700;color:#000;white-space:pre;letter-spacing:0.1px">Emp. 8</div></div>
<div style="left:485px;top:572px;width:76px;height:18px;overflow:hidden"><div style="left:2px;top:3.86px;font-size:11px;line-height:12.65px;font-weight:700;color:#000;white-space:pre;letter-spacing:0.1px">Emp. 8</div></div>
<div style="left:562px;top:572px;width:76px;height:18px;overflow:hidden"><div style="left:2px;top:3.86px;font-size:11px;line-height:12.65px;font-weight:700;color:#000;white-space:pre;letter-spacing:0.1px">Emp. 8</div></div>
<div style="left:639px;top:572px;width:76px;height:18px;overflow:hidden"><div style="left:2px;top:3.86px;font-size:11px;line-height:12.65px;font-weight:700;color:#000;white-space:pre;letter-spacing:0.1px">Emp. 8</div></div>
<div style="left:716px;top:572px;width:76px;height:18px;overflow:hidden"><div style="left:2px;top:3.86px;font-size:11px;line-height:12.65px;font-weight:700;color:#000;white-space:pre;letter-spacing:0.1px">Emp. 8</div></div>
<div style="left:793px;top:572px;width:76px;height:18px;overflow:hidden"><div style="left:2px;top:3.86px;font-size:11px;line-height:12.65px;font-weight:700;color:#000;white-space:pre;letter-spacing:0.1px">Emp. 8</div></div>
<div style="left:870px;top:572px;width:76px;height:18px;overflow:hidden"><div style="left:2px;top:3.86px;font-size:11px;line-height:12.65px;font-weight:700;color:#000;white-space:pre;letter-spacing:0.1px">Emp. 8</div></div>
<div style="left:947px;top:572px;width:76px;height:18px;overflow:hidden"><div style="left:2px;top:3.86px;font-size:11px;line-height:12.65px;font-weight:700;color:#000;white-space:pre;letter-spacing:0.1px">Emp. 8</div></div>
<div style="left:1024px;top:572px;width:76px;height:18px;overflow:hidden"><div style="left:2px;top:3.86px;font-size:11px;line-height:12.65px;font-weight:700;color:#000;white-space:pre;letter-spacing:0.1px">Emp. 8</div></div>
<div style="left:1101px;top:572px;width:76px;height:18px;overflow:hidden"><div style="left:2px;top:3.86px;font-size:11px;line-height:12.65px;font-weight:700;color:#000;white-space:pre;letter-spacing:0.1px">Emp. 8</div></div>
<div style="left:1178px;top:572px;width:76px;height:18px;overflow:hidden"><div style="left:2px;top:3.86px;font-size:11px;line-height:12.65px;font-weight:700;color:#000;white-space:pre;letter-spacing:0.1px">Emp. 8</div></div>
<div style="left:1255px;top:572px;width:76px;height:18px;overflow:hidden"><div style="left:2px;top:3.86px;font-size:11px;line-height:12.65px;font-weight:700;color:#000;white-space:pre;letter-spacing:0.1px">Emp. 8</div></div>
<div style="left:22px;top:585px;width:76px;height:18px;overflow:hidden"><div style="left:2px;top:3.86px;font-size:11px;line-height:12.65px;font-weight:700;color:#000;white-space:pre;letter-spacing:0.1px">Emp. 9</div></div>
<div style="left:99px;top:585px;width:76px;height:18px;overflow:hidden"><div style="left:2px;top:3.86px;font-size:11px;line-height:12.65px;font-weight:700;color:#000;white-space:pre;letter-spacing:0.1px">Emp. 9</div></div>
<div style="left:176px;top:585px;width:76px;height:18px;overflow:hidden"><div style="left:2px;top:3.86px;font-size:11px;line-height:12.65px;font-weight:700;color:#000;white-space:pre;letter-spacing:0.1px">Emp. 9</div></div>
<div style="left:253px;top:585px;width:76px;height:18px;overflow:hidden"><div style="left:2px;top:3.86px;font-size:11px;line-height:12.65px;font-weight:700;color:#000;white-space:pre;letter-spacing:0.1px">Emp. 9</div></div>
<div style="left:330px;top:585px;width:76px;height:18px;overflow:hidden"><div style="left:2px;top:3.86px;font-size:11px;line-height:12.65px;font-weight:700;color:#000;white-space:pre;letter-spacing:0.1px">Emp. 9</div></div>
<div style="left:407px;top:585px;width:77px;height:18px;overflow:hidden"><div style="left:2px;top:3.86px;font-size:11px;line-height:12.65px;font-weight:700;color:#000;white-space:pre;letter-spacing:0.1px">Emp. 9</div></div>
<div style="left:485px;top:585px;width:76px;height:18px;overflow:hidden"><div style="left:2px;top:3.86px;font-size:11px;line-height:12.65px;font-weight:700;color:#000;white-space:pre;letter-spacing:0.1px">Emp. 9</div></div>
<div style="left:562px;top:585px;width:76px;height:18px;overflow:hidden"><div style="left:2px;top:3.86px;font-size:11px;line-height:12.65px;font-weight:700;color:#000;white-space:pre;letter-spacing:0.1px">Emp. 9</div></div>
<div style="left:639px;top:585px;width:76px;height:18px;overflow:hidden"><div style="left:2px;top:3.86px;font-size:11px;line-height:12.65px;font-weight:700;color:#000;white-space:pre;letter-spacing:0.1px">Emp. 9</div></div>
<div style="left:716px;top:585px;width:76px;height:18px;overflow:hidden"><div style="left:2px;top:3.86px;font-size:11px;line-height:12.65px;font-weight:700;color:#000;white-space:pre;letter-spacing:0.1px">Emp. 9</div></div>
<div style="left:793px;top:585px;width:76px;height:18px;overflow:hidden"><div style="left:2px;top:3.86px;font-size:11px;line-height:12.65px;font-weight:700;color:#000;white-space:pre;letter-spacing:0.1px">Emp. 9</div></div>
<div style="left:870px;top:585px;width:76px;height:18px;overflow:hidden"><div style="left:2px;top:3.86px;font-size:11px;line-height:12.65px;font-weight:700;color:#000;white-space:pre;letter-spacing:0.1px">Emp. 9</div></div>
<div style="left:947px;top:585px;width:76px;height:18px;overflow:hidden"><div style="left:2px;top:3.86px;font-size:11px;line-height:12.65px;font-weight:700;color:#000;white-space:pre;letter-spacing:0.1px">Emp. 9</div></div>
<div style="left:1024px;top:585px;width:76px;height:18px;overflow:hidden"><div style="left:2px;top:3.86px;font-size:11px;line-height:12.65px;font-weight:700;color:#000;white-space:pre;letter-spacing:0.1px">Emp. 9</div></div>
<div style="left:1101px;top:585px;width:76px;height:18px;overflow:hidden"><div style="left:2px;top:3.86px;font-size:11px;line-height:12.65px;font-weight:700;color:#000;white-space:pre;letter-spacing:0.1px">Emp. 9</div></div>
<div style="left:1178px;top:585px;width:76px;height:18px;overflow:hidden"><div style="left:2px;top:3.86px;font-size:11px;line-height:12.65px;font-weight:700;color:#000;white-space:pre;letter-spacing:0.1px">Emp. 9</div></div>
<div style="left:1255px;top:585px;width:76px;height:18px;overflow:hidden"><div style="left:2px;top:3.86px;font-size:11px;line-height:12.65px;font-weight:700;color:#000;white-space:pre;letter-spacing:0.1px">Emp. 9</div></div>
<div style="left:22px;top:598px;width:76px;height:18px;overflow:hidden"><div style="left:2px;top:3.86px;font-size:11px;line-height:12.65px;font-weight:700;color:#000;white-space:pre;letter-spacing:0.1px">Emp. 10</div></div>
<div style="left:99px;top:598px;width:76px;height:18px;overflow:hidden"><div style="left:2px;top:3.86px;font-size:11px;line-height:12.65px;font-weight:700;color:#000;white-space:pre;letter-spacing:0.1px">Emp. 10</div></div>
<div style="left:176px;top:598px;width:76px;height:18px;overflow:hidden"><div style="left:2px;top:3.86px;font-size:11px;line-height:12.65px;font-weight:700;color:#000;white-space:pre;letter-spacing:0.1px">Emp. 10</div></div>
<div style="left:253px;top:598px;width:76px;height:18px;overflow:hidden"><div style="left:2px;top:3.86px;font-size:11px;line-height:12.65px;font-weight:700;color:#000;white-space:pre;letter-spacing:0.1px">Emp. 10</div></div>
<div style="left:330px;top:598px;width:76px;height:18px;overflow:hidden"><div style="left:2px;top:3.86px;font-size:11px;line-height:12.65px;font-weight:700;color:#000;white-space:pre;letter-spacing:0.1px">Emp. 10</div></div>
<div style="left:407px;top:598px;width:77px;height:18px;overflow:hidden"><div style="left:2px;top:3.86px;font-size:11px;line-height:12.65px;font-weight:700;color:#000;white-space:pre;letter-spacing:0.1px">Emp. 10</div></div>
<div style="left:485px;top:598px;width:76px;height:18px;overflow:hidden"><div style="left:2px;top:3.86px;font-size:11px;line-height:12.65px;font-weight:700;color:#000;white-space:pre;letter-spacing:0.1px">Emp. 10</div></div>
<div style="left:562px;top:598px;width:76px;height:18px;overflow:hidden"><div style="left:2px;top:3.86px;font-size:11px;line-height:12.65px;font-weight:700;color:#000;white-space:pre;letter-spacing:0.1px">Emp. 10</div></div>
<div style="left:639px;top:598px;width:76px;height:18px;overflow:hidden"><div style="left:2px;top:3.86px;font-size:11px;line-height:12.65px;font-weight:700;color:#000;white-space:pre;letter-spacing:0.1px">Emp. 10</div></div>
<div style="left:716px;top:598px;width:76px;height:18px;overflow:hidden"><div style="left:2px;top:3.86px;font-size:11px;line-height:12.65px;font-weight:700;color:#000;white-space:pre;letter-spacing:0.1px">Emp. 10</div></div>
<div style="left:793px;top:598px;width:76px;height:18px;overflow:hidden"><div style="left:2px;top:3.86px;font-size:11px;line-height:12.65px;font-weight:700;color:#000;white-space:pre;letter-spacing:0.1px">Emp. 10</div></div>
<div style="left:870px;top:598px;width:76px;height:18px;overflow:hidden"><div style="left:2px;top:3.86px;font-size:11px;line-height:12.65px;font-weight:700;color:#000;white-space:pre;letter-spacing:0.1px">Emp. 10</div></div>
<div style="left:947px;top:598px;width:76px;height:18px;overflow:hidden"><div style="left:2px;top:3.86px;font-size:11px;line-height:12.65px;font-weight:700;color:#000;white-space:pre;letter-spacing:0.1px">Emp. 10</div></div>
<div style="left:1024px;top:598px;width:76px;height:18px;overflow:hidden"><div style="left:2px;top:3.86px;font-size:11px;line-height:12.65px;font-weight:700;color:#000;white-space:pre;letter-spacing:0.1px">Emp. 10</div></div>
<div style="left:1101px;top:598px;width:76px;height:18px;overflow:hidden"><div style="left:2px;top:3.86px;font-size:11px;line-height:12.65px;font-weight:700;color:#000;white-space:pre;letter-spacing:0.1px">Emp. 10</div></div>
<div style="left:1178px;top:598px;width:76px;height:18px;overflow:hidden"><div style="left:2px;top:3.86px;font-size:11px;line-height:12.65px;font-weight:700;color:#000;white-space:pre;letter-spacing:0.1px">Emp. 10</div></div>
<div style="left:1255px;top:598px;width:76px;height:18px;overflow:hidden"><div style="left:2px;top:3.86px;font-size:11px;line-height:12.65px;font-weight:700;color:#000;white-space:pre;letter-spacing:0.1px">Emp. 10</div></div>
<div style="left:22px;top:611px;width:76px;height:18px;overflow:hidden"><div style="left:2px;top:3.86px;font-size:11px;line-height:12.65px;font-weight:700;color:#000;white-space:pre;letter-spacing:0.1px">Emp. 11</div></div>
<div style="left:99px;top:611px;width:76px;height:18px;overflow:hidden"><div style="left:2px;top:3.86px;font-size:11px;line-height:12.65px;font-weight:700;color:#000;white-space:pre;letter-spacing:0.1px">Emp. 11</div></div>
<div style="left:176px;top:611px;width:76px;height:18px;overflow:hidden"><div style="left:2px;top:3.86px;font-size:11px;line-height:12.65px;font-weight:700;color:#000;white-space:pre;letter-spacing:0.1px">Emp. 11</div></div>
<div style="left:253px;top:611px;width:76px;height:18px;overflow:hidden"><div style="left:2px;top:3.86px;font-size:11px;line-height:12.65px;font-weight:700;color:#000;white-space:pre;letter-spacing:0.1px">Emp. 11</div></div>
<div style="left:330px;top:611px;width:76px;height:18px;overflow:hidden"><div style="left:2px;top:3.86px;font-size:11px;line-height:12.65px;font-weight:700;color:#000;white-space:pre;letter-spacing:0.1px">Emp. 11</div></div>
<div style="left:407px;top:611px;width:77px;height:18px;overflow:hidden"><div style="left:2px;top:3.86px;font-size:11px;line-height:12.65px;font-weight:700;color:#000;white-space:pre;letter-spacing:0.1px">Emp. 11</div></div>
<div style="left:485px;top:611px;width:76px;height:18px;overflow:hidden"><div style="left:2px;top:3.86px;font-size:11px;line-height:12.65px;font-weight:700;color:#000;white-space:pre;letter-spacing:0.1px">Emp. 11</div></div>
<div style="left:562px;top:611px;width:76px;height:18px;overflow:hidden"><div style="left:2px;top:3.86px;font-size:11px;line-height:12.65px;font-weight:700;color:#000;white-space:pre;letter-spacing:0.1px">Emp. 11</div></div>
<div style="left:639px;top:611px;width:76px;height:18px;overflow:hidden"><div style="left:2px;top:3.86px;font-size:11px;line-height:12.65px;font-weight:700;color:#000;white-space:pre;letter-spacing:0.1px">Emp. 11</div></div>
<div style="left:716px;top:611px;width:76px;height:18px;overflow:hidden"><div style="left:2px;top:3.86px;font-size:11px;line-height:12.65px;font-weight:700;color:#000;white-space:pre;letter-spacing:0.1px">Emp. 11</div></div>
<div style="left:793px;top:611px;width:76px;height:18px;overflow:hidden"><div style="left:2px;top:3.86px;font-size:11px;line-height:12.65px;font-weight:700;color:#000;white-space:pre;letter-spacing:0.1px">Emp. 11</div></div>
<div style="left:870px;top:611px;width:76px;height:18px;overflow:hidden"><div style="left:2px;top:3.86px;font-size:11px;line-height:12.65px;font-weight:700;color:#000;white-space:pre;letter-spacing:0.1px">Emp. 11</div></div>
<div style="left:947px;top:611px;width:76px;height:18px;overflow:hidden"><div style="left:2px;top:3.86px;font-size:11px;line-height:12.65px;font-weight:700;color:#000;white-space:pre;letter-spacing:0.1px">Emp. 11</div></div>
<div style="left:1024px;top:611px;width:76px;height:18px;overflow:hidden"><div style="left:2px;top:3.86px;font-size:11px;line-height:12.65px;font-weight:700;color:#000;white-space:pre;letter-spacing:0.1px">Emp. 11</div></div>
<div style="left:1101px;top:611px;width:76px;height:18px;overflow:hidden"><div style="left:2px;top:3.86px;font-size:11px;line-height:12.65px;font-weight:700;color:#000;white-space:pre;letter-spacing:0.1px">Emp. 11</div></div>
<div style="left:1178px;top:611px;width:76px;height:18px;overflow:hidden"><div style="left:2px;top:3.86px;font-size:11px;line-height:12.65px;font-weight:700;color:#000;white-space:pre;letter-spacing:0.1px">Emp. 11</div></div>
<div style="left:1255px;top:611px;width:76px;height:18px;overflow:hidden"><div style="left:2px;top:3.86px;font-size:11px;line-height:12.65px;font-weight:700;color:#000;white-space:pre;letter-spacing:0.1px">Emp. 11</div></div>
<div style="left:22px;top:624px;width:76px;height:18px;overflow:hidden"><div style="left:2px;top:3.86px;font-size:11px;line-height:12.65px;font-weight:700;color:#000;white-space:pre;letter-spacing:0.1px">Emp. 12</div></div>
<div style="left:99px;top:624px;width:76px;height:18px;overflow:hidden"><div style="left:2px;top:3.86px;font-size:11px;line-height:12.65px;font-weight:700;color:#000;white-space:pre;letter-spacing:0.1px">Emp. 12</div></div>
<div style="left:176px;top:624px;width:76px;height:18px;overflow:hidden"><div style="left:2px;top:3.86px;font-size:11px;line-height:12.65px;font-weight:700;color:#000;white-space:pre;letter-spacing:0.1px">Emp. 12</div></div>
<div style="left:253px;top:624px;width:76px;height:18px;overflow:hidden"><div style="left:2px;top:3.86px;font-size:11px;line-height:12.65px;font-weight:700;color:#000;white-space:pre;letter-spacing:0.1px">Emp. 12</div></div>
<div style="left:330px;top:624px;width:76px;height:18px;overflow:hidden"><div style="left:2px;top:3.86px;font-size:11px;line-height:12.65px;font-weight:700;color:#000;white-space:pre;letter-spacing:0.1px">Emp. 12</div></div>
<div style="left:407px;top:624px;width:77px;height:18px;overflow:hidden"><div style="left:2px;top:3.86px;font-size:11px;line-height:12.65px;font-weight:700;color:#000;white-space:pre;letter-spacing:0.1px">Emp. 12</div></div>
<div style="left:485px;top:624px;width:76px;height:18px;overflow:hidden"><div style="left:2px;top:3.86px;font-size:11px;line-height:12.65px;font-weight:700;color:#000;white-space:pre;letter-spacing:0.1px">Emp. 12</div></div>
<div style="left:562px;top:624px;width:76px;height:18px;overflow:hidden"><div style="left:2px;top:3.86px;font-size:11px;line-height:12.65px;font-weight:700;color:#000;white-space:pre;letter-spacing:0.1px">Emp. 12</div></div>
<div style="left:639px;top:624px;width:76px;height:18px;overflow:hidden"><div style="left:2px;top:3.86px;font-size:11px;line-height:12.65px;font-weight:700;color:#000;white-space:pre;letter-spacing:0.1px">Emp. 12</div></div>
<div style="left:716px;top:624px;width:76px;height:18px;overflow:hidden"><div style="left:2px;top:3.86px;font-size:11px;line-height:12.65px;font-weight:700;color:#000;white-space:pre;letter-spacing:0.1px">Emp. 12</div></div>
<div style="left:793px;top:624px;width:76px;height:18px;overflow:hidden"><div style="left:2px;top:3.86px;font-size:11px;line-height:12.65px;font-weight:700;color:#000;white-space:pre;letter-spacing:0.1px">Emp. 12</div></div>
<div style="left:870px;top:624px;width:76px;height:18px;overflow:hidden"><div style="left:2px;top:3.86px;font-size:11px;line-height:12.65px;font-weight:700;color:#000;white-space:pre;letter-spacing:0.1px">Emp. 12</div></div>
<div style="left:947px;top:624px;width:76px;height:18px;overflow:hidden"><div style="left:2px;top:3.86px;font-size:11px;line-height:12.65px;font-weight:700;color:#000;white-space:pre;letter-spacing:0.1px">Emp. 12</div></div>
<div style="left:1024px;top:624px;width:76px;height:18px;overflow:hidden"><div style="left:2px;top:3.86px;font-size:11px;line-height:12.65px;font-weight:700;color:#000;white-space:pre;letter-spacing:0.1px">Emp. 12</div></div>
<div style="left:1101px;top:624px;width:76px;height:18px;overflow:hidden"><div style="left:2px;top:3.86px;font-size:11px;line-height:12.65px;font-weight:700;color:#000;white-space:pre;letter-spacing:0.1px">Emp. 12</div></div>
<div style="left:1178px;top:624px;width:76px;height:18px;overflow:hidden"><div style="left:2px;top:3.86px;font-size:11px;line-height:12.65px;font-weight:700;color:#000;white-space:pre;letter-spacing:0.1px">Emp. 12</div></div>
<div style="left:1255px;top:624px;width:76px;height:18px;overflow:hidden"><div style="left:2px;top:3.86px;font-size:11px;line-height:12.65px;font-weight:700;color:#000;white-space:pre;letter-spacing:0.1px">Emp. 12</div></div>
<div style="left:21px;top:642px;width:1250px;height:16px;background:#000;"></div>
<div style="left:22px;top:644px;width:75px;height:12px;background:#fff;"></div>
<div style="left:22.5px;top:643.86px;font-size:11px;line-height:12.65px;font-weight:700;color:#000;white-space:pre;width:77px;text-align:center;letter-spacing:0.2px;">5 / 5</div>
<div style="left:99px;top:644px;width:75px;height:12px;background:#fff;"></div>
<div style="left:99.5px;top:643.86px;font-size:11px;line-height:12.65px;font-weight:700;color:#000;white-space:pre;width:77px;text-align:center;letter-spacing:0.2px;">5 / 5</div>
<div style="left:176px;top:644px;width:75px;height:12px;background:#fff;"></div>
<div style="left:176.5px;top:643.86px;font-size:11px;line-height:12.65px;font-weight:700;color:#000;white-space:pre;width:77px;text-align:center;letter-spacing:0.2px;">5 / 5</div>
<div style="left:253px;top:644px;width:75px;height:12px;background:#fff;"></div>
<div style="left:253.5px;top:643.86px;font-size:11px;line-height:12.65px;font-weight:700;color:#000;white-space:pre;width:77px;text-align:center;letter-spacing:0.2px;">5 / 5</div>
<div style="left:330px;top:644px;width:75px;height:12px;background:#fff;"></div>
<div style="left:330.5px;top:643.86px;font-size:11px;line-height:12.65px;font-weight:700;color:#000;white-space:pre;width:77px;text-align:center;letter-spacing:0.2px;">5 / 5</div>
<div style="left:407px;top:644px;width:76px;height:12px;background:#fff;"></div>
<div style="left:407.5px;top:643.86px;font-size:11px;line-height:12.65px;font-weight:700;color:#000;white-space:pre;width:78px;text-align:center;letter-spacing:0.2px;">5 / 5</div>
<div style="left:485px;top:644px;width:75px;height:12px;background:#fff;"></div>
<div style="left:485.5px;top:643.86px;font-size:11px;line-height:12.65px;font-weight:700;color:#000;white-space:pre;width:77px;text-align:center;letter-spacing:0.2px;">5 / 5</div>
<div style="left:562px;top:644px;width:75px;height:12px;background:#fff;"></div>
<div style="left:562.5px;top:643.86px;font-size:11px;line-height:12.65px;font-weight:700;color:#000;white-space:pre;width:77px;text-align:center;letter-spacing:0.2px;">5 / 5</div>
<div style="left:639px;top:644px;width:75px;height:12px;background:#fff;"></div>
<div style="left:639.5px;top:643.86px;font-size:11px;line-height:12.65px;font-weight:700;color:#000;white-space:pre;width:77px;text-align:center;letter-spacing:0.2px;">5 / 5</div>
<div style="left:716px;top:644px;width:75px;height:12px;background:#fff;"></div>
<div style="left:716.5px;top:643.86px;font-size:11px;line-height:12.65px;font-weight:700;color:#000;white-space:pre;width:77px;text-align:center;letter-spacing:0.2px;">5 / 5</div>
<div style="left:793px;top:644px;width:75px;height:12px;background:#fff;"></div>
<div style="left:793.5px;top:643.86px;font-size:11px;line-height:12.65px;font-weight:700;color:#000;white-space:pre;width:77px;text-align:center;letter-spacing:0.2px;">5 / 5</div>
<div style="left:870px;top:644px;width:75px;height:12px;background:#fff;"></div>
<div style="left:870.5px;top:643.86px;font-size:11px;line-height:12.65px;font-weight:700;color:#000;white-space:pre;width:77px;text-align:center;letter-spacing:0.2px;">5 / 5</div>
<div style="left:947px;top:644px;width:75px;height:12px;background:#fff;"></div>
<div style="left:947.5px;top:643.86px;font-size:11px;line-height:12.65px;font-weight:700;color:#000;white-space:pre;width:77px;text-align:center;letter-spacing:0.2px;">5 / 5</div>
<div style="left:1024px;top:644px;width:75px;height:12px;background:#fff;"></div>
<div style="left:1024.5px;top:643.86px;font-size:11px;line-height:12.65px;font-weight:700;color:#ff0000;white-space:pre;width:77px;text-align:center;letter-spacing:0.2px;">5 / 4</div>
<div style="left:1101px;top:644px;width:75px;height:12px;background:#fff;"></div>
<div style="left:1101.5px;top:643.86px;font-size:11px;line-height:12.65px;font-weight:700;color:#ff0000;white-space:pre;width:77px;text-align:center;letter-spacing:0.2px;">5 / 4</div>
<div style="left:1178px;top:644px;width:75px;height:12px;background:#fff;"></div>
<div style="left:1178.5px;top:643.86px;font-size:11px;line-height:12.65px;font-weight:700;color:#ff0000;white-space:pre;width:77px;text-align:center;letter-spacing:0.2px;">5 / 4</div>
<div style="left:1255px;top:644px;width:75px;height:12px;background:#fff;"></div>
<div style="left:1255.5px;top:643.86px;font-size:11px;line-height:12.65px;font-weight:700;color:#000;white-space:pre;width:77px;text-align:center;letter-spacing:0.2px;">5 / 5</div>
<div style="left:22px;top:455.25px;font-size:9.5px;line-height:10.92px;font-weight:700;color:#000;white-space:pre;width:77px;text-align:center;letter-spacing:0.2px;-webkit-text-stroke:0.25px #000;">1</div>
<div style="left:22px;top:481.25px;font-size:9.5px;line-height:10.92px;font-weight:700;color:#000;white-space:pre;width:77px;text-align:center;letter-spacing:0.2px;-webkit-text-stroke:0.25px #000;">1</div>
<div style="left:99px;top:455.25px;font-size:9.5px;line-height:10.92px;font-weight:700;color:#000;white-space:pre;width:77px;text-align:center;letter-spacing:0.2px;-webkit-text-stroke:0.25px #000;">2</div>
<div style="left:99px;top:481.25px;font-size:9.5px;line-height:10.92px;font-weight:700;color:#000;white-space:pre;width:77px;text-align:center;letter-spacing:0.2px;-webkit-text-stroke:0.25px #000;">2</div>
<div style="left:176px;top:455.25px;font-size:9.5px;line-height:10.92px;font-weight:700;color:#000;white-space:pre;width:77px;text-align:center;letter-spacing:0.2px;-webkit-text-stroke:0.25px #000;">3</div>
<div style="left:176px;top:481.25px;font-size:9.5px;line-height:10.92px;font-weight:700;color:#000;white-space:pre;width:77px;text-align:center;letter-spacing:0.2px;-webkit-text-stroke:0.25px #000;">3</div>
<div style="left:253px;top:455.25px;font-size:9.5px;line-height:10.92px;font-weight:700;color:#000;white-space:pre;width:77px;text-align:center;letter-spacing:0.2px;-webkit-text-stroke:0.25px #000;">4</div>
<div style="left:253px;top:481.25px;font-size:9.5px;line-height:10.92px;font-weight:700;color:#000;white-space:pre;width:77px;text-align:center;letter-spacing:0.2px;-webkit-text-stroke:0.25px #000;">4</div>
<div style="left:330px;top:455.25px;font-size:9.5px;line-height:10.92px;font-weight:700;color:#000;white-space:pre;width:77px;text-align:center;letter-spacing:0.2px;-webkit-text-stroke:0.25px #000;">5</div>
<div style="left:330px;top:481.25px;font-size:9.5px;line-height:10.92px;font-weight:700;color:#000;white-space:pre;width:77px;text-align:center;letter-spacing:0.2px;-webkit-text-stroke:0.25px #000;">5</div>
<div style="left:407px;top:455.25px;font-size:9.5px;line-height:10.92px;font-weight:700;color:#000;white-space:pre;width:78px;text-align:center;letter-spacing:0.2px;-webkit-text-stroke:0.25px #000;">6</div>
<div style="left:407px;top:481.25px;font-size:9.5px;line-height:10.92px;font-weight:700;color:#000;white-space:pre;width:78px;text-align:center;letter-spacing:0.2px;-webkit-text-stroke:0.25px #000;">6</div>
<div style="left:485px;top:455.25px;font-size:9.5px;line-height:10.92px;font-weight:700;color:#000;white-space:pre;width:77px;text-align:center;letter-spacing:0.2px;-webkit-text-stroke:0.25px #000;">7</div>
<div style="left:485px;top:481.25px;font-size:9.5px;line-height:10.92px;font-weight:700;color:#000;white-space:pre;width:77px;text-align:center;letter-spacing:0.2px;-webkit-text-stroke:0.25px #000;">7</div>
<div style="left:562px;top:455.25px;font-size:9.5px;line-height:10.92px;font-weight:700;color:#000;white-space:pre;width:77px;text-align:center;letter-spacing:0.2px;-webkit-text-stroke:0.25px #000;">8</div>
<div style="left:562px;top:481.25px;font-size:9.5px;line-height:10.92px;font-weight:700;color:#000;white-space:pre;width:77px;text-align:center;letter-spacing:0.2px;-webkit-text-stroke:0.25px #000;">8</div>
<div style="left:639px;top:455.25px;font-size:9.5px;line-height:10.92px;font-weight:700;color:#000;white-space:pre;width:77px;text-align:center;letter-spacing:0.2px;-webkit-text-stroke:0.25px #000;">9</div>
<div style="left:639px;top:481.25px;font-size:9.5px;line-height:10.92px;font-weight:700;color:#000;white-space:pre;width:77px;text-align:center;letter-spacing:0.2px;-webkit-text-stroke:0.25px #000;">9</div>
<div style="left:716px;top:455.25px;font-size:9.5px;line-height:10.92px;font-weight:700;color:#000;white-space:pre;width:77px;text-align:center;letter-spacing:0.2px;-webkit-text-stroke:0.25px #000;">10</div>
<div style="left:716px;top:481.25px;font-size:9.5px;line-height:10.92px;font-weight:700;color:#000;white-space:pre;width:77px;text-align:center;letter-spacing:0.2px;-webkit-text-stroke:0.25px #000;">10</div>
<div style="left:793px;top:455.25px;font-size:9.5px;line-height:10.92px;font-weight:700;color:#000;white-space:pre;width:77px;text-align:center;letter-spacing:0.2px;-webkit-text-stroke:0.25px #000;">11</div>
<div style="left:793px;top:481.25px;font-size:9.5px;line-height:10.92px;font-weight:700;color:#000;white-space:pre;width:77px;text-align:center;letter-spacing:0.2px;-webkit-text-stroke:0.25px #000;">11</div>
<div style="left:870px;top:455.25px;font-size:9.5px;line-height:10.92px;font-weight:700;color:#000;white-space:pre;width:77px;text-align:center;letter-spacing:0.2px;-webkit-text-stroke:0.25px #000;">12</div>
<div style="left:870px;top:481.25px;font-size:9.5px;line-height:10.92px;font-weight:700;color:#000;white-space:pre;width:77px;text-align:center;letter-spacing:0.2px;-webkit-text-stroke:0.25px #000;">1</div>
<div style="left:947px;top:455.25px;font-size:9.5px;line-height:10.92px;font-weight:700;color:#000;white-space:pre;width:77px;text-align:center;letter-spacing:0.2px;-webkit-text-stroke:0.25px #000;">13</div>
<div style="left:947px;top:481.25px;font-size:9.5px;line-height:10.92px;font-weight:700;color:#000;white-space:pre;width:77px;text-align:center;letter-spacing:0.2px;-webkit-text-stroke:0.25px #000;">2</div>
<div style="left:1024px;top:455.25px;font-size:9.5px;line-height:10.92px;font-weight:700;color:#000;white-space:pre;width:77px;text-align:center;letter-spacing:0.2px;-webkit-text-stroke:0.25px #000;">14</div>
<div style="left:1024px;top:481.25px;font-size:9.5px;line-height:10.92px;font-weight:700;color:#000;white-space:pre;width:77px;text-align:center;letter-spacing:0.2px;-webkit-text-stroke:0.25px #000;">3</div>
<div style="left:1101px;top:455.25px;font-size:9.5px;line-height:10.92px;font-weight:700;color:#000;white-space:pre;width:77px;text-align:center;letter-spacing:0.2px;-webkit-text-stroke:0.25px #000;">15</div>
<div style="left:1101px;top:481.25px;font-size:9.5px;line-height:10.92px;font-weight:700;color:#000;white-space:pre;width:77px;text-align:center;letter-spacing:0.2px;-webkit-text-stroke:0.25px #000;">4</div>
<div style="left:1178px;top:455.25px;font-size:9.5px;line-height:10.92px;font-weight:700;color:#000;white-space:pre;width:77px;text-align:center;letter-spacing:0.6px;-webkit-text-stroke:0.25px #000;">replace</div>
<div style="left:1178px;top:481.25px;font-size:9.5px;line-height:10.92px;font-weight:700;color:#000;white-space:pre;width:77px;text-align:center;letter-spacing:0.2px;-webkit-text-stroke:0.25px #000;">5</div>
<div style="left:1255px;top:455.25px;font-size:9.5px;line-height:10.92px;font-weight:700;color:#000;white-space:pre;width:77px;text-align:center;letter-spacing:0.2px;-webkit-text-stroke:0.25px #000;">16</div>
<div style="left:1255px;top:481.25px;font-size:9.5px;line-height:10.92px;font-weight:700;color:#000;white-space:pre;width:77px;text-align:center;letter-spacing:0.2px;-webkit-text-stroke:0.25px #000;">6</div>
<div style="left:560px;top:466px;width:80px;height:17px;border:1px solid #000;"></div>
<div style="left:561px;top:467px;width:78px;height:15px;border:1px solid #fff;"></div>
<div style="left:562px;top:468px;width:76px;height:13px;border:1px solid #000;"></div>
<div style="left:636px;top:479px;width:6px;height:6px;background:#000;border:1px solid #fff;"></div>
<div style="left:0px;top:157px;width:21px;height:519px;background:#e4e8ed;"></div>
<div style="left:21px;top:142px;width:1px;height:534px;background:#9fa5ad;"></div>
<div style="left:0px;top:190px;width:21px;height:1px;background:#c5cad1;"></div>
<div style="left:0px;top:175.41px;font-size:11.5px;line-height:13.22px;font-weight:400;color:#2a2a2a;white-space:pre;width:21px;text-align:center;">1</div>
<div style="left:0px;top:194.41px;font-size:11.5px;line-height:13.22px;font-weight:400;color:#2a2a2a;white-space:pre;width:21px;text-align:center;">2</div>
<div style="left:0px;top:224px;width:21px;height:1px;background:#c5cad1;"></div>
<div style="left:0px;top:209.41px;font-size:11.5px;line-height:13.22px;font-weight:400;color:#2a2a2a;white-space:pre;width:21px;text-align:center;">3</div>
<div style="left:0px;top:243px;width:21px;height:1px;background:#c5cad1;"></div>
<div style="left:0px;top:228.41px;font-size:11.5px;line-height:13.22px;font-weight:400;color:#2a2a2a;white-space:pre;width:21px;text-align:center;">4</div>
<div style="left:0px;top:256px;width:21px;height:1px;background:#c5cad1;"></div>
<div style="left:0px;top:241.41px;font-size:11.5px;line-height:13.22px;font-weight:400;color:#2a2a2a;white-space:pre;width:21px;text-align:center;">5</div>
<div style="left:0px;top:275px;width:21px;height:1px;background:#c5cad1;"></div>
<div style="left:0px;top:260.41px;font-size:11.5px;line-height:13.22px;font-weight:400;color:#2a2a2a;white-space:pre;width:21px;text-align:center;">6</div>
<div style="left:0px;top:288px;width:21px;height:1px;background:#c5cad1;"></div>
<div style="left:0px;top:273.41px;font-size:11.5px;line-height:13.22px;font-weight:400;color:#2a2a2a;white-space:pre;width:21px;text-align:center;">7</div>
<div style="left:0px;top:308px;width:21px;height:1px;background:#c5cad1;"></div>
<div style="left:0px;top:293.41px;font-size:11.5px;line-height:13.22px;font-weight:400;color:#2a2a2a;white-space:pre;width:21px;text-align:center;">8</div>
<div style="left:0px;top:321px;width:21px;height:1px;background:#c5cad1;"></div>
<div style="left:0px;top:307.41px;font-size:11.5px;line-height:13.22px;font-weight:400;color:#2a2a2a;white-space:pre;width:21px;text-align:center;">9</div>
<div style="left:0px;top:334px;width:21px;height:1px;background:#c5cad1;"></div>
<div style="left:0px;top:320.41px;font-size:11.5px;line-height:13.22px;font-weight:400;color:#2a2a2a;white-space:pre;width:21px;text-align:center;">10</div>
<div style="left:0px;top:348px;width:21px;height:1px;background:#c5cad1;"></div>
<div style="left:0px;top:334.41px;font-size:11.5px;line-height:13.22px;font-weight:400;color:#2a2a2a;white-space:pre;width:21px;text-align:center;">11</div>
<div style="left:0px;top:361px;width:21px;height:1px;background:#c5cad1;"></div>
<div style="left:0px;top:347.41px;font-size:11.5px;line-height:13.22px;font-weight:400;color:#2a2a2a;white-space:pre;width:21px;text-align:center;">12</div>
<div style="left:0px;top:375px;width:21px;height:1px;background:#c5cad1;"></div>
<div style="left:0px;top:361.41px;font-size:11.5px;line-height:13.22px;font-weight:400;color:#2a2a2a;white-space:pre;width:21px;text-align:center;">13</div>
<div style="left:0px;top:388px;width:21px;height:1px;background:#c5cad1;"></div>
<div style="left:0px;top:374.41px;font-size:11.5px;line-height:13.22px;font-weight:400;color:#2a2a2a;white-space:pre;width:21px;text-align:center;">14</div>
<div style="left:0px;top:408px;width:21px;height:1px;background:#c5cad1;"></div>
<div style="left:0px;top:393.41px;font-size:11.5px;line-height:13.22px;font-weight:400;color:#2a2a2a;white-space:pre;width:21px;text-align:center;">15</div>
<div style="left:0px;top:421px;width:21px;height:1px;background:#c5cad1;"></div>
<div style="left:0px;top:407.41px;font-size:11.5px;line-height:13.22px;font-weight:400;color:#2a2a2a;white-space:pre;width:21px;text-align:center;">16</div>
<div style="left:0px;top:439px;width:21px;height:1px;background:#c5cad1;"></div>
<div style="left:0px;top:425.41px;font-size:11.5px;line-height:13.22px;font-weight:400;color:#2a2a2a;white-space:pre;width:21px;text-align:center;">17</div>
<div style="left:0px;top:453px;width:21px;height:1px;background:#c5cad1;"></div>
<div style="left:0px;top:439.41px;font-size:11.5px;line-height:13.22px;font-weight:400;color:#2a2a2a;white-space:pre;width:21px;text-align:center;">18</div>
<div style="left:0px;top:467px;width:21px;height:1px;background:#c5cad1;"></div>
<div style="left:0px;top:453.41px;font-size:11.5px;line-height:13.22px;font-weight:400;color:#2a2a2a;white-space:pre;width:21px;text-align:center;">19</div>
<div style="left:0px;top:481px;width:21px;height:1px;background:#c5cad1;"></div>
<div style="left:0px;top:467px;width:22px;height:15px;background:linear-gradient(#fdd35e,#ffe26c);border:1px solid #d99b30;border-left:none;"></div>
<div style="left:0px;top:467.41px;font-size:11.5px;line-height:13.22px;font-weight:400;color:#000;white-space:pre;width:21px;text-align:center;">20</div>
<div style="left:0px;top:493px;width:21px;height:1px;background:#c5cad1;"></div>
<div style="left:0px;top:479.41px;font-size:11.5px;line-height:13.22px;font-weight:400;color:#2a2a2a;white-space:pre;width:21px;text-align:center;">21</div>
<div style="left:0px;top:513px;width:21px;height:1px;background:#c5cad1;"></div>
<div style="left:0px;top:498.41px;font-size:11.5px;line-height:13.22px;font-weight:400;color:#2a2a2a;white-space:pre;width:21px;text-align:center;">22</div>
<div style="left:0px;top:526px;width:21px;height:1px;background:#c5cad1;"></div>
<div style="left:0px;top:511.41px;font-size:11.5px;line-height:13.22px;font-weight:400;color:#2a2a2a;white-space:pre;width:21px;text-align:center;">23</div>
<div style="left:0px;top:546px;width:21px;height:1px;background:#c5cad1;"></div>
<div style="left:0px;top:531.41px;font-size:11.5px;line-height:13.22px;font-weight:400;color:#2a2a2a;white-space:pre;width:21px;text-align:center;">24</div>
<div style="left:0px;top:559px;width:21px;height:1px;background:#c5cad1;"></div>
<div style="left:0px;top:545.41px;font-size:11.5px;line-height:13.22px;font-weight:400;color:#2a2a2a;white-space:pre;width:21px;text-align:center;">25</div>
<div style="left:0px;top:577px;width:21px;height:1px;background:#c5cad1;"></div>
<div style="left:0px;top:563.41px;font-size:11.5px;line-height:13.22px;font-weight:400;color:#2a2a2a;white-space:pre;width:21px;text-align:center;">26</div>
<div style="left:0px;top:590px;width:21px;height:1px;background:#c5cad1;"></div>
<div style="left:0px;top:576.41px;font-size:11.5px;line-height:13.22px;font-weight:400;color:#2a2a2a;white-space:pre;width:21px;text-align:center;">27</div>
<div style="left:0px;top:603px;width:21px;height:1px;background:#c5cad1;"></div>
<div style="left:0px;top:589.41px;font-size:11.5px;line-height:13.22px;font-weight:400;color:#2a2a2a;white-space:pre;width:21px;text-align:center;">28</div>
<div style="left:0px;top:616px;width:21px;height:1px;background:#c5cad1;"></div>
<div style="left:0px;top:602.41px;font-size:11.5px;line-height:13.22px;font-weight:400;color:#2a2a2a;white-space:pre;width:21px;text-align:center;">29</div>
<div style="left:0px;top:629px;width:21px;height:1px;background:#c5cad1;"></div>
<div style="left:0px;top:615.41px;font-size:11.5px;line-height:13.22px;font-weight:400;color:#2a2a2a;white-space:pre;width:21px;text-align:center;">30</div>
<div style="left:0px;top:643px;width:21px;height:1px;background:#c5cad1;"></div>
<div style="left:0px;top:628.41px;font-size:11.5px;line-height:13.22px;font-weight:400;color:#2a2a2a;white-space:pre;width:21px;text-align:center;">31</div>
<div style="left:0px;top:657px;width:21px;height:1px;background:#c5cad1;"></div>
<div style="left:0px;top:642.41px;font-size:11.5px;line-height:13.22px;font-weight:400;color:#2a2a2a;white-space:pre;width:21px;text-align:center;">32</div>
<div style="left:0px;top:670px;width:21px;height:1px;background:#c5cad1;"></div>
<div style="left:0px;top:655.41px;font-size:11.5px;line-height:13.22px;font-weight:400;color:#2a2a2a;white-space:pre;width:21px;text-align:center;">33</div>
<div style="left:0px;top:676.41px;font-size:11.5px;line-height:13.22px;font-weight:400;color:#2a2a2a;white-space:pre;width:21px;text-align:center;">34</div>
<div style="left:0px;top:209px;width:21px;height:1px;background:#8a8a8a;"></div>
<div style="left:0px;top:142px;width:1271px;height:15px;background:#dfe2e7;"></div>
<div style="left:0px;top:156px;width:1271px;height:1px;background:#a4a9b0;"></div>
<div style="left:0px;top:141px;width:1271px;height:1px;background:#8f9398;"></div>
<div style="left:21px;top:142px;width:2px;height:14px;background:#aeb2b8;"></div>
<div style="left:98px;top:142px;width:1px;height:14px;background:#c0c5cc;"></div>
<div style="left:21px;top:143.33px;font-size:10.5px;line-height:12.07px;font-weight:400;color:#333;white-space:pre;width:77px;text-align:center;">B</div>
<div style="left:175px;top:142px;width:1px;height:14px;background:#c0c5cc;"></div>
<div style="left:98px;top:143.33px;font-size:10.5px;line-height:12.07px;font-weight:400;color:#333;white-space:pre;width:77px;text-align:center;">C</div>
<div style="left:252px;top:142px;width:1px;height:14px;background:#c0c5cc;"></div>
<div style="left:175px;top:143.33px;font-size:10.5px;line-height:12.07px;font-weight:400;color:#333;white-space:pre;width:77px;text-align:center;">D</div>
<div style="left:329px;top:142px;width:1px;height:14px;background:#c0c5cc;"></div>
<div style="left:252px;top:143.33px;font-size:10.5px;line-height:12.07px;font-weight:400;color:#333;white-space:pre;width:77px;text-align:center;">E</div>
<div style="left:406px;top:142px;width:1px;height:14px;background:#c0c5cc;"></div>
<div style="left:329px;top:143.33px;font-size:10.5px;line-height:12.07px;font-weight:400;color:#333;white-space:pre;width:77px;text-align:center;">F</div>
<div style="left:484px;top:142px;width:1px;height:14px;background:#c0c5cc;"></div>
<div style="left:406px;top:143.33px;font-size:10.5px;line-height:12.07px;font-weight:400;color:#333;white-space:pre;width:78px;text-align:center;">G</div>
<div style="left:561px;top:142px;width:1px;height:14px;background:#c0c5cc;"></div>
<div style="left:484px;top:143.33px;font-size:10.5px;line-height:12.07px;font-weight:400;color:#333;white-space:pre;width:77px;text-align:center;">H</div>
<div style="left:561px;top:142px;width:78px;height:15px;background:linear-gradient(#fdd35e,#ffea74);border:1px solid #d99b30;border-top:none;"></div>
<div style="left:561px;top:143.33px;font-size:10.5px;line-height:12.07px;font-weight:400;color:#333;white-space:pre;width:77px;text-align:center;">I</div>
<div style="left:715px;top:142px;width:1px;height:14px;background:#c0c5cc;"></div>
<div style="left:638px;top:143.33px;font-size:10.5px;line-height:12.07px;font-weight:400;color:#333;white-space:pre;width:77px;text-align:center;">J</div>
<div style="left:792px;top:142px;width:1px;height:14px;background:#c0c5cc;"></div>
<div style="left:715px;top:143.33px;font-size:10.5px;line-height:12.07px;font-weight:400;color:#333;white-space:pre;width:77px;text-align:center;">K</div>
<div style="left:869px;top:142px;width:1px;height:14px;background:#c0c5cc;"></div>
<div style="left:792px;top:143.33px;font-size:10.5px;line-height:12.07px;font-weight:400;color:#333;white-space:pre;width:77px;text-align:center;">L</div>
<div style="left:946px;top:142px;width:1px;height:14px;background:#c0c5cc;"></div>
<div style="left:869px;top:143.33px;font-size:10.5px;line-height:12.07px;font-weight:400;color:#333;white-space:pre;width:77px;text-align:center;">M</div>
<div style="left:1023px;top:142px;width:1px;height:14px;background:#c0c5cc;"></div>
<div style="left:946px;top:143.33px;font-size:10.5px;line-height:12.07px;font-weight:400;color:#333;white-space:pre;width:77px;text-align:center;">N</div>
<div style="left:1100px;top:142px;width:1px;height:14px;background:#c0c5cc;"></div>
<div style="left:1023px;top:143.33px;font-size:10.5px;line-height:12.07px;font-weight:400;color:#333;white-space:pre;width:77px;text-align:center;">O</div>
<div style="left:1177px;top:142px;width:1px;height:14px;background:#c0c5cc;"></div>
<div style="left:1100px;top:143.33px;font-size:10.5px;line-height:12.07px;font-weight:400;color:#333;white-space:pre;width:77px;text-align:center;">P</div>
<div style="left:1254px;top:142px;width:1px;height:14px;background:#c0c5cc;"></div>
<div style="left:1177px;top:143.33px;font-size:10.5px;line-height:12.07px;font-weight:400;color:#333;white-space:pre;width:77px;text-align:center;">Q</div>
<div style="left:1331px;top:142px;width:1px;height:14px;background:#c0c5cc;"></div>
<div style="left:1254px;top:143.33px;font-size:10.5px;line-height:12.07px;font-weight:400;color:#333;white-space:pre;width:77px;text-align:center;">R</div>
<svg style="left:11px;top:146px" width="8" height="8"><polygon points="7.5,0.5 7.5,7.5 0.5,7.5" fill="#c0c5cc"/></svg>
<div style="left:0px;top:112px;width:1271px;height:29px;background:#dfe3e8;"></div>
<div style="left:0px;top:112px;width:1271px;height:1px;background:#9ea4ab;"></div>
<div style="left:0px;top:116px;width:1271px;height:1px;background:#a9afb6;"></div>
<div style="left:0px;top:117px;width:1271px;height:20px;background:#fff;"></div>
<div style="left:0px;top:137px;width:1271px;height:1px;background:#aab0b7;"></div>
<div style="left:0px;top:138px;width:1271px;height:1px;background:#ffffff;"></div>
<div style="left:0px;top:139px;width:1271px;height:2px;background:#dfe3f1;"></div>
<svg style="left:145px;top:125px" width="9" height="6"><polygon points="0,0 8,0 4,5" fill="#333"/></svg>
<div style="left:159px;top:117px;width:85px;height:20px;background:#dee2e7;border-radius:10px 0 0 10px;border-left:1px solid #b8bec6;"></div>
<div style="left:243px;top:117px;width:1px;height:20px;background:#b9bfc6;"></div>
<div style="left:165px;top:123px;width:8px;height:8px;border-radius:4px;background:linear-gradient(#b9bec6,#e9ecef);"></div>
<div style="left:226px;top:119.10px;font-size:14px;line-height:16.1px;font-weight:700;color:#2a2a2a;white-space:pre;font-family:'Liberation Serif',serif;font-style:italic;">f</div>
<div style="left:230.5px;top:121.78px;font-size:10px;line-height:11.5px;font-weight:700;color:#2a2a2a;white-space:pre;font-family:'Liberation Serif',serif;font-style:italic;">x</div>
<div style="left:252.5px;top:121.94px;font-size:12px;line-height:13.8px;font-weight:400;color:#000;white-space:pre;transform:scaleX(1.0806);transform-origin:0 0;">Emp. 6</div>
<div style="left:0px;top:0px;width:1271px;height:27px;background:linear-gradient(#d9e0e8 0px,#e9f1f6 3px,#f2fafc 7px,#f6fcfe 26px);"></div>
<div style="left:1098px;top:-5px;width:190px;height:8px;background:#a3abbb;border-radius:6px;filter:blur(1.3px);"></div>
<div style="left:0px;top:26px;width:1271px;height:1px;background:#bdc3cb;"></div>
<div style="left:0px;top:3px;width:55px;height:24px;border-radius:0 3px 0 0;background:radial-gradient(ellipse 60% 50% at 50% 100%,rgba(110,205,70,0.95),rgba(110,205,70,0) 100%),linear-gradient(#5aa842 0%,#338a30 40%,#2d7f2d 60%,#3f9c38 100%);border:1px solid #215f27;border-left:none;border-bottom:none"></div>
<div style="left:18.5px;top:9.41px;font-size:11.5px;line-height:13.22px;font-weight:700;color:#fff;white-space:pre;transform:scaleX(0.9037);transform-origin:0 0;">File</div>
<div style="left:588px;top:3px;width:103px;height:25px;background:#fff;border:1px solid #bfc5cc;border-bottom:none;border-radius:3px 3px 0 0"></div>
<div style="left:71.9px;top:9.41px;font-size:11.5px;line-height:13.22px;font-weight:400;color:#4a4a4a;white-space:pre;transform:scaleX(0.9768);transform-origin:0 0;">Home</div>
<div style="left:129.2px;top:9.41px;font-size:11.5px;line-height:13.22px;font-weight:400;color:#4a4a4a;white-space:pre;transform:scaleX(1.0192);transform-origin:0 0;">Insert</div>
<div style="left:186.7px;top:9.41px;font-size:11.5px;line-height:13.22px;font-weight:400;color:#4a4a4a;white-space:pre;transform:scaleX(0.9639);transform-origin:0 0;">Page Layout</div>
<div style="left:276.7px;top:9.41px;font-size:11.5px;line-height:13.22px;font-weight:400;color:#4a4a4a;white-space:pre;transform:scaleX(0.9885);transform-origin:0 0;">Formulas</div>
<div style="left:351.7px;top:9.41px;font-size:11.5px;line-height:13.22px;font-weight:400;color:#4a4a4a;white-space:pre;transform:scaleX(1.0087);transform-origin:0 0;">Data</div>
<div style="left:403.7px;top:9.41px;font-size:11.5px;line-height:13.22px;font-weight:400;color:#4a4a4a;white-space:pre;transform:scaleX(0.9641);transform-origin:0 0;">Review</div>
<div style="left:467.9px;top:9.41px;font-size:11.5px;line-height:13.22px;font-weight:400;color:#4a4a4a;white-space:pre;transform:scaleX(1.0161);transform-origin:0 0;">View</div>
<div style="left:521.0px;top:9.41px;font-size:11.5px;line-height:13.22px;font-weight:400;color:#4a4a4a;white-space:pre;transform:scaleX(0.9976);transform-origin:0 0;">Developer</div>
<div style="left:600.8px;top:9.41px;font-size:11.5px;line-height:13.22px;font-weight:400;color:#4a4a4a;white-space:pre;transform:scaleX(1.0418);transform-origin:0 0;">Manning Tools</div>
<div style="left:0px;top:27px;width:1271px;height:85px;background:linear-gradient(#ffffff 0%,#fdfdfe 40%,#eef1f4 100%);"></div>
<div style="left:156px;top:28px;width:1px;height:84px;background:#c2c7cd;"></div>
<div style="left:157px;top:28px;width:1px;height:84px;background:#ffffff;"></div>
<div style="left:270px;top:28px;width:1px;height:84px;background:#c2c7cd;"></div>
<div style="left:271px;top:28px;width:1px;height:84px;background:#ffffff;"></div>
<div style="left:559px;top:28px;width:1px;height:84px;background:#c2c7cd;"></div>
<div style="left:560px;top:28px;width:1px;height:84px;background:#ffffff;"></div>
<div style="left:39px;top:98.41px;font-size:11.5px;line-height:13.22px;font-weight:400;color:#70768f;white-space:pre;transform:scaleX(1.0404);transform-origin:0 0;">Manning Tools</div>
<div style="left:176px;top:98.41px;font-size:11.5px;line-height:13.22px;font-weight:400;color:#70768f;white-space:pre;transform:scaleX(0.9818);transform-origin:0 0;">Program Filters</div>
<div style="left:391.5px;top:98.41px;font-size:11.5px;line-height:13.22px;font-weight:400;color:#70768f;white-space:pre;transform:scaleX(1.0009);transform-origin:0 0;">Edit Tools</div>
<div style="left:24.8px;top:34.41px;font-size:11.5px;line-height:13.22px;font-weight:400;color:#2e2e2e;white-space:pre;transform:scaleX(1.0415);transform-origin:0 0;">Unlock Manning Config</div>
<div style="left:25px;top:56.41px;font-size:11.5px;line-height:13.22px;font-weight:400;color:#2e2e2e;white-space:pre;transform:scaleX(0.9582);transform-origin:0 0;">Advance Week(s)</div>
<div style="left:25px;top:78.41px;font-size:11.5px;line-height:13.22px;font-weight:400;color:#2e2e2e;white-space:pre;transform:scaleX(1.0574);transform-origin:0 0;">Validate</div>
<div style="left:184px;top:34.41px;font-size:11.5px;line-height:13.22px;font-weight:400;color:#2e2e2e;white-space:pre;transform:scaleX(0.9244);transform-origin:0 0;">FSR Requests</div>
<div style="left:184px;top:56.41px;font-size:11.5px;line-height:13.22px;font-weight:400;color:#2e2e2e;white-space:pre;transform:scaleX(1.0134);transform-origin:0 0;">Yearly Manning</div>
<div style="left:184px;top:78.41px;font-size:11.5px;line-height:13.22px;font-weight:400;color:#2e2e2e;white-space:pre;transform:scaleX(1.0000);transform-origin:0 0;">Field Roster</div>
<div style="left:282px;top:68.41px;font-size:11.5px;line-height:13.22px;font-weight:400;color:#2e2e2e;white-space:pre;transform:scaleX(1.0373);transform-origin:0 0;">Insert</div>
<div style="left:322.3px;top:68.41px;font-size:11.5px;line-height:13.22px;font-weight:400;color:#2e2e2e;white-space:pre;transform:scaleX(0.9953);transform-origin:0 0;">Delete</div>
<div style="left:362px;top:68.41px;font-size:11.5px;line-height:13.22px;font-weight:400;color:#2e2e2e;white-space:pre;transform:scaleX(1.0163);transform-origin:0 0;">Format</div>
<svg style="left:293px;top:85px" width="7" height="4"><polygon points="0,0 6,0 3,3.5" fill="#6a6a6a"/></svg>
<svg style="left:335px;top:85px" width="7" height="4"><polygon points="0,0 6,0 3,3.5" fill="#6a6a6a"/></svg>
<svg style="left:377px;top:85px" width="7" height="4"><polygon points="0,0 6,0 3,3.5" fill="#6a6a6a"/></svg>
<div style="left:424.4px;top:34.41px;font-size:11.5px;line-height:13.22px;font-weight:400;color:#2e2e2e;white-space:pre;transform:scaleX(0.9468);transform-origin:0 0;">Rename Site</div>
<div style="left:424.4px;top:56.41px;font-size:11.5px;line-height:13.22px;font-weight:400;color:#2e2e2e;white-space:pre;transform:scaleX(0.9832);transform-origin:0 0;">Move Site</div>
<div style="left:424.4px;top:78.41px;font-size:11.5px;line-height:13.22px;font-weight:400;color:#2e2e2e;white-space:pre;transform:scaleX(1.0128);transform-origin:0 0;">Change Authorized Slots</div>
<svg style="left:6px;top:32px" width="16" height="16" viewBox="0 0 16 16"><defs><linearGradient id="lg" x1="0" y1="0" x2="0" y2="1"><stop offset="0" stop-color="#fff0b0"/><stop offset="0.5" stop-color="#f0c860"/><stop offset="1" stop-color="#c8922c"/></linearGradient></defs><path d="M5 7 V4.8 A3 3 0 0 1 11.2 4.8 V7" fill="none" stroke="#b48a3a" stroke-width="1.8"/><rect x="1.5" y="6.5" width="13" height="8.5" rx="1.5" fill="url(#lg)" stroke="#a07020" stroke-width="1"/><path d="M8 9 L6.3 11 H7.3 V12.5 H8.7 V11 H9.7 Z" fill="#5a3d00"/></svg>
<svg style="left:5px;top:53px" width="17" height="17" viewBox="0 0 17 17"><defs><linearGradient id="ag" x1="0" y1="0" x2="0" y2="1"><stop offset="0" stop-color="#ffffff"/><stop offset="1" stop-color="#cfe0f4"/></linearGradient></defs><path d="M1.5 6 H9 V1.2 L15.8 8.5 L9 15.8 V11 H1.5 Z" fill="url(#ag)" stroke="#3b5a8a" stroke-width="1.1" stroke-linejoin="miter"/></svg>
<svg style="left:5px;top:75px" width="17" height="18" viewBox="0 0 17 18"><rect x="1" y="1.5" width="11" height="12" fill="#fff" stroke="#6f84a6" stroke-width="1"/><path d="M1 4.5 H12 M1 7.5 H12 M1 10.5 H12 M3.8 1.5 V13.5 M6.6 1.5 V13.5 M9.4 1.5 V13.5" stroke="#9aaac2" stroke-width="0.8"/><rect x="4.3" y="4.3" width="3.4" height="3.4" fill="#e8402a"/><path d="M9.2 8.6 Q9.2 5.6 12.2 5.6 Q15.2 5.6 15.2 8.6 Q15.2 10.4 12.6 11.6 V13.6" fill="none" stroke="#2a9a2a" stroke-width="1.9"/><circle cx="12.6" cy="16" r="1.3" fill="#2a9a2a"/></svg>
<svg style="left:165px;top:32px" width="17" height="16" viewBox="0 0 17 16"><rect x="1.5" y="1.5" width="13.5" height="13.5" fill="#eef1f6" stroke="#2c4f8a" stroke-width="1.2"/><circle cx="8" cy="6.2" r="2.9" fill="#6b6b6b"/><circle cx="7.3" cy="5.6" r="1.2" fill="#b5b5b5"/><path d="M3.6 14.3 Q3.8 9.8 8 9.8 Q12.2 9.8 12.4 14.3 Z" fill="#d0601e"/></svg>
<svg style="left:164px;top:53px" width="18" height="18" viewBox="0 0 18 18"><rect x="1.5" y="1.5" width="15" height="15" fill="#fff" stroke="#5d789e" stroke-width="1"/><rect x="1.5" y="1.5" width="15" height="2.2" fill="#9fb3cf"/><line x1="4.5" y1="3.5" x2="4.5" y2="16.5" stroke="#aebdd4" stroke-width="0.9"/><line x1="7.5" y1="3.5" x2="7.5" y2="16.5" stroke="#aebdd4" stroke-width="0.9"/><line x1="10.5" y1="3.5" x2="10.5" y2="16.5" stroke="#aebdd4" stroke-width="0.9"/><line x1="13.5" y1="3.5" x2="13.5" y2="16.5" stroke="#aebdd4" stroke-width="0.9"/><line x1="1.5" y1="6.9" x2="16.5" y2="6.9" stroke="#aebdd4" stroke-width="0.9"/><line x1="1.5" y1="10.100000000000001" x2="16.5" y2="10.100000000000001" stroke="#aebdd4" stroke-width="0.9"/><line x1="1.5" y1="13.3" x2="16.5" y2="13.3" stroke="#aebdd4" stroke-width="0.9"/></svg>
<svg style="left:164px;top:75px" width="18" height="17" viewBox="0 0 18 17"><circle cx="8" cy="3.2" r="2.3" fill="#f5b800"/><rect x="6" y="5.5" width="4.2" height="8" rx="1.5" fill="#e89c00"/><circle cx="14" cy="3.5" r="2.4" fill="#e02828"/><rect x="11.8" y="6" width="4.6" height="9.5" rx="1.5" fill="#c81818"/><circle cx="4" cy="5.8" r="2.3" fill="#3a6ee8"/><rect x="1.6" y="8.2" width="4.8" height="8.3" rx="1.5" fill="#1f4fc8"/><circle cx="10" cy="6.8" r="2.3" fill="#3cc03c"/><rect x="7.6" y="9.2" width="4.8" height="7.5" rx="1.5" fill="#1e9a1e"/></svg>
<svg style="left:280px;top:33px" width="32" height="28" viewBox="0 0 32 28"><rect x="1.5" y="1.5" width="14" height="5" fill="#fff" stroke="#5f7591" stroke-width="1.2"/><line x1="8.5" y1="1.5" x2="8.5" y2="6.5" stroke="#5f7591" stroke-width="1"/><rect x="1.5" y="16.5" width="14" height="10" fill="#fff" stroke="#5f7591" stroke-width="1.2"/><line x1="8.5" y1="16.5" x2="8.5" y2="26.5" stroke="#5f7591" stroke-width="1"/><line x1="1.5" y1="21.5" x2="15.5" y2="21.5" stroke="#5f7591" stroke-width="1"/><rect x="16.5" y="8.3" width="14" height="6.5" fill="#7095e0" stroke="#4a6ab8" stroke-width="1"/><line x1="23.5" y1="8.3" x2="23.5" y2="14.8" stroke="#4a6ab8"/><path d="M14.5 11.5 H8.5 M10.8 9.2 L8.2 11.5 L10.8 13.8" fill="none" stroke="#2a3a50" stroke-width="1.3"/></svg>
<svg style="left:325px;top:33px" width="27" height="28" viewBox="0 0 27 28"><rect x="1.5" y="1.5" width="14" height="5" fill="#fff" stroke="#5f7591" stroke-width="1.2"/><line x1="8.5" y1="1.5" x2="8.5" y2="6.5" stroke="#5f7591" stroke-width="1"/><rect x="1.5" y="16.5" width="14" height="10" fill="#fff" stroke="#5f7591" stroke-width="1.2"/><line x1="8.5" y1="16.5" x2="8.5" y2="26.5" stroke="#5f7591" stroke-width="1"/><line x1="1.5" y1="21.5" x2="15.5" y2="21.5" stroke="#5f7591" stroke-width="1"/><rect x="6" y="8.5" width="13" height="6.5" fill="none" stroke="#1c3a8a" stroke-width="1.1" stroke-dasharray="1.1,1.3"/><path d="M14.5 6 L24.5 16 M24.5 6 L14.5 16" stroke="#f04028" stroke-width="1.8"/><path d="M14.2 16.5 L17 13" stroke="#d02010" stroke-width="2.6"/></svg>
<svg style="left:364px;top:32px" width="32" height="31" viewBox="0 0 32 31"><path d="M1.5 1 V4 M26.5 1 V4" stroke="#2a3a50" stroke-width="1.2"/><path d="M3 2.3 H8 M19.5 2.3 H25" stroke="#2a3a50" stroke-width="1" stroke-dasharray="1,1.5"/><path d="M8.5 2.3 H18.5 M10.5 0.6 L8.5 2.3 L10.5 4 M16.5 0.6 L18.5 2.3 L16.5 4" fill="none" stroke="#2a3a50" stroke-width="1.2"/><path d="M2.5 27 V29.5 H9.5 V27 M10.5 27 V29.5 H17 V27" fill="#fff" stroke="#7a8aa2" stroke-width="1.1"/><rect x="1.5" y="5.5" width="29" height="21.5" rx="2" fill="#f2f5fb" stroke="#6a7f9c" stroke-width="1.2"/><path d="M1.5 10.5 H30.5 M1.5 21.5 H30.5 M9.5 5.5 V27 M18.5 5.5 V27 M26.5 5.5 V27" stroke="#8a9cb6" stroke-width="1.1"/><rect x="10" y="11" width="8" height="10" fill="#6f94e2"/></svg>
<div style="left:405px;top:33.86px;font-size:11px;line-height:12.65px;font-weight:700;color:#1a1a1a;white-space:pre;transform:scaleX(0.8904);transform-origin:0 0;font-family:'Liberation Serif',serif;">abc</div>
<div style="left:405px;top:41px;width:16px;height:1px;background:#1a1a1a;"></div>
<svg style="left:404px;top:54px" width="17" height="16" viewBox="0 0 17 16"><rect x="1.5" y="1.5" width="14" height="13" fill="#f2f5fa" stroke="#3e5a80" stroke-width="1"/><rect x="1.5" y="1.5" width="14" height="2" fill="#6e9be0"/><path d="M5.3 4 V12.8 M3.2 10.2 L5.3 12.8 L7.4 10.2" stroke="#2a62d8" stroke-width="1.3" fill="none"/><path d="M11.6 13 V4.2 M9.4 7 L11.6 4.2 L13.8 7" stroke="#d8401e" stroke-width="1.3" fill="none"/></svg>
<svg style="left:404px;top:75px" width="18" height="18" viewBox="0 0 18 18"><rect x="3" y="3.3" width="7" height="4.8" fill="#e8eaee" stroke="#7f8a9a" stroke-width="1"/><rect x="8.3" y="10.6" width="6.3" height="5" fill="#e8eaee" stroke="#7f8a9a" stroke-width="1"/><path d="M12 3 Q15.5 3.5 15.2 9.5" fill="none" stroke="#2f6ad8" stroke-width="1.6"/><path d="M9.8 3 L13 0.6 L13 5.4 Z" fill="#2f6ad8"/><path d="M3.5 9 Q2.2 13.5 4.5 14.5" fill="none" stroke="#2f6ad8" stroke-width="1.6"/><path d="M7.8 14.5 L4.4 11.8 L4.4 17.2 Z" fill="#2f6ad8"/></svg>
<div style="left:659px;top:41px;width:236px;height:623px;border-radius:7px;box-shadow:2px 3px 12px 3px rgba(0,0,0,0.62);"></div>
<div style="left:659px;top:41px;width:236px;height:623px;border-radius:7px;border:1px solid rgba(30,30,40,0.85);background:linear-gradient(90deg,rgba(110,150,205,0.3),rgba(140,180,230,0.3));backdrop-filter:blur(1.8px);"></div>
<div style="left:660px;top:42px;width:234px;height:28px;border-radius:6px 6px 0 0;background:linear-gradient(100deg,#c8ddf3 0%,#d5e7f8 35%,#c2dcf5 60%,#d6e8f9 100%);"></div>
<div style="left:660px;top:42px;width:234px;height:621px;border-radius:6px;border:1px solid rgba(255,255,255,0.55);"></div>
<div style="left:668px;top:50.41px;font-size:11.5px;line-height:13.22px;font-weight:400;color:#000;white-space:pre;transform:scaleX(1.0062);transform-origin:0 0;">Filters</div>
<div style="left:841px;top:41px;width:47px;height:20px;border:1px solid #5e2a25;border-top:none;border-radius:0 0 5px 5px;background:linear-gradient(#eba79f 0%,#e0887b 40%,#c9412f 50%,#b83324 80%,#d06a56 100%);"></div>
<svg style="left:859px;top:45px" width="13" height="12"><path d="M3 2.5 L10 9.5 M10 2.5 L3 9.5" stroke="#505050" stroke-width="4.2" stroke-linecap="round"/><path d="M3.3 2.8 L9.7 9.2 M9.7 2.8 L3.3 9.2" stroke="#f4f4f4" stroke-width="2.2" stroke-linecap="square"/></svg>
<div style="left:666px;top:70px;width:222px;height:587px;background:#f0f0f0;border:1px solid #566d88;"></div>
<div style="left:675px;top:71px;width:32px;height:24px;background:#fff;border-left:2px solid #9a9a9a;border-top:2px solid #9a9a9a;border-right:2px solid #6f6f6f;border-bottom:2px solid #6f6f6f;"></div>
<div style="left:707px;top:71px;width:32px;height:24px;background:#fff;border-left:2px solid #9a9a9a;border-top:2px solid #9a9a9a;border-right:2px solid #6f6f6f;border-bottom:2px solid #6f6f6f;"></div>
<div style="left:747px;top:71px;width:24px;height:24px;background:#e8e8e8;border-left:2px solid #9a9a9a;border-top:2px solid #9a9a9a;border-right:2px solid #6f6f6f;border-bottom:2px solid #6f6f6f;"></div>
<div style="left:771px;top:71px;width:24px;height:24px;background:#e8e8e8;border-left:2px solid #9a9a9a;border-top:2px solid #9a9a9a;border-right:2px solid #6f6f6f;border-bottom:2px solid #6f6f6f;"></div>
<div style="left:751px;top:75px;width:15px;height:15px;background:#fbfbfb"></div>
<div style="left:775px;top:75px;width:15px;height:15px;background:#fbfbfb"></div>
<svg style="left:684px;top:77px" width="13" height="10"><path d="M6.5 0 L12.5 6 H9 V9.5 H4 V6 H0.5 Z" fill="#0a2fe0"/></svg>
<svg style="left:716px;top:77px" width="13" height="10"><path d="M6.5 9.5 L12.5 3.5 H9 V0 H4 V3.5 H0.5 Z" fill="#0a2fe0"/></svg>
<div style="left:756px;top:81px;width:6px;height:2px;background:#0a2fe0;"></div>
<div style="left:779px;top:81px;width:7px;height:1.5px;background:#0a2fe0;"></div>
<div style="left:781.8px;top:78.5px;width:1.5px;height:6.5px;background:#0a2fe0;"></div>
<div style="left:675px;top:95px;width:207px;height:320px;background:#fff;"></div>
<div style="left:679px;top:100px;width:8px;height:8px;border:1px solid #707070;background:#fff"></div>
<div style="left:680px;top:104px;width:6px;height:1px;background:#404040;"></div>
<div style="left:687px;top:104px;width:5px;height:1px;background:repeating-linear-gradient(90deg,#7a7a7a 0 1px,transparent 1px 2px);"></div>
<div style="left:697px;top:110px;width:1px;height:186px;background:repeating-linear-gradient(180deg,#7a7a7a 0 1px,transparent 1px 2px);"></div>
<div style="left:692px;top:97px;width:13px;height:13px;background:#fff;border:2px solid #7b7b7b;"></div>
<svg style="left:694px;top:99px" width="9" height="9"><path d="M1 4.5 L3.5 7 L8 1.5" fill="none" stroke="#000" stroke-width="2"/></svg>
<div style="left:708px;top:97.23px;font-size:10.6px;line-height:12.19px;font-weight:400;color:#000;white-space:pre;">View/Hide All</div>
<div style="left:694px;top:116px;width:8px;height:8px;border:1px solid #707070;background:#fff"></div>
<div style="left:695px;top:120px;width:6px;height:1px;background:#404040;"></div>
<div style="left:702px;top:120px;width:5px;height:1px;background:repeating-linear-gradient(90deg,#7a7a7a 0 1px,transparent 1px 2px);"></div>
<div style="left:712px;top:126px;width:1px;height:58px;background:repeating-linear-gradient(180deg,#7a7a7a 0 1px,transparent 1px 2px);"></div>
<div style="left:707px;top:113px;width:13px;height:13px;background:#fff;border:2px solid #7b7b7b;"></div>
<svg style="left:709px;top:115px" width="9" height="9"><path d="M1 4.5 L3.5 7 L8 1.5" fill="none" stroke="#000" stroke-width="2"/></svg>
<div style="left:723px;top:113.23px;font-size:10.6px;line-height:12.19px;font-weight:400;color:#000;white-space:pre;">Manager 1</div>
<div style="left:709px;top:132px;width:8px;height:8px;border:1px solid #707070;background:#fff"></div>
<div style="left:710px;top:136px;width:6px;height:1px;background:#404040;"></div>
<div style="left:717px;top:136px;width:5px;height:1px;background:repeating-linear-gradient(90deg,#7a7a7a 0 1px,transparent 1px 2px);"></div>
<div style="left:727px;top:142px;width:1px;height:26px;background:repeating-linear-gradient(180deg,#7a7a7a 0 1px,transparent 1px 2px);"></div>
<div style="left:722px;top:129px;width:13px;height:13px;background:#fff;border:2px solid #7b7b7b;"></div>
<svg style="left:724px;top:131px" width="9" height="9"><path d="M1 4.5 L3.5 7 L8 1.5" fill="none" stroke="#000" stroke-width="2"/></svg>
<div style="left:738px;top:129.23px;font-size:10.6px;line-height:12.19px;font-weight:400;color:#000;white-space:pre;">Conus</div>
<div style="left:728px;top:152px;width:9px;height:1px;background:repeating-linear-gradient(90deg,#7a7a7a 0 1px,transparent 1px 2px);"></div>
<div style="left:737px;top:145px;width:13px;height:13px;background:#fff;border:2px solid #7b7b7b;"></div>
<svg style="left:739px;top:147px" width="9" height="9"><path d="M1 4.5 L3.5 7 L8 1.5" fill="none" stroke="#000" stroke-width="2"/></svg>
<div style="left:753px;top:145.23px;font-size:10.6px;line-height:12.19px;font-weight:400;color:#000;white-space:pre;">Site 1</div>
<div style="left:728px;top:168px;width:9px;height:1px;background:repeating-linear-gradient(90deg,#7a7a7a 0 1px,transparent 1px 2px);"></div>
<div style="left:737px;top:161px;width:13px;height:13px;background:#fff;border:2px solid #7b7b7b;"></div>
<svg style="left:739px;top:163px" width="9" height="9"><path d="M1 4.5 L3.5 7 L8 1.5" fill="none" stroke="#000" stroke-width="2"/></svg>
<div style="left:753px;top:161.23px;font-size:10.6px;line-height:12.19px;font-weight:400;color:#000;white-space:pre;">Site 2</div>
<div style="left:709px;top:180px;width:8px;height:8px;border:1px solid #707070;background:#fff"></div>
<div style="left:710px;top:184px;width:6px;height:1px;background:#404040;"></div>
<div style="left:717px;top:184px;width:5px;height:1px;background:repeating-linear-gradient(90deg,#7a7a7a 0 1px,transparent 1px 2px);"></div>
<div style="left:727px;top:190px;width:1px;height:26px;background:repeating-linear-gradient(180deg,#7a7a7a 0 1px,transparent 1px 2px);"></div>
<div style="left:722px;top:177px;width:13px;height:13px;background:#fff;border:2px solid #7b7b7b;"></div>
<svg style="left:724px;top:179px" width="9" height="9"><path d="M1 4.5 L3.5 7 L8 1.5" fill="none" stroke="#000" stroke-width="2"/></svg>
<div style="left:738px;top:177.23px;font-size:10.6px;line-height:12.19px;font-weight:400;color:#000;white-space:pre;">Oconus</div>
<div style="left:728px;top:200px;width:9px;height:1px;background:repeating-linear-gradient(90deg,#7a7a7a 0 1px,transparent 1px 2px);"></div>
<div style="left:737px;top:193px;width:13px;height:13px;background:#fff;border:2px solid #7b7b7b;"></div>
<svg style="left:739px;top:195px" width="9" height="9"><path d="M1 4.5 L3.5 7 L8 1.5" fill="none" stroke="#000" stroke-width="2"/></svg>
<div style="left:753px;top:193.23px;font-size:10.6px;line-height:12.19px;font-weight:400;color:#000;white-space:pre;">Site 3</div>
<div style="left:728px;top:216px;width:9px;height:1px;background:repeating-linear-gradient(90deg,#7a7a7a 0 1px,transparent 1px 2px);"></div>
<div style="left:737px;top:209px;width:13px;height:13px;background:#fff;border:2px solid #7b7b7b;"></div>
<svg style="left:739px;top:211px" width="9" height="9"><path d="M1 4.5 L3.5 7 L8 1.5" fill="none" stroke="#000" stroke-width="2"/></svg>
<div style="left:753px;top:209.23px;font-size:10.6px;line-height:12.19px;font-weight:400;color:#000;white-space:pre;">Site 4</div>
<div style="left:694px;top:228px;width:8px;height:8px;border:1px solid #707070;background:#fff"></div>
<div style="left:695px;top:232px;width:6px;height:1px;background:#404040;"></div>
<div style="left:702px;top:232px;width:5px;height:1px;background:repeating-linear-gradient(90deg,#7a7a7a 0 1px,transparent 1px 2px);"></div>
<div style="left:712px;top:238px;width:1px;height:42px;background:repeating-linear-gradient(180deg,#7a7a7a 0 1px,transparent 1px 2px);"></div>
<div style="left:707px;top:225px;width:13px;height:13px;background:#fff;border:2px solid #7b7b7b;"></div>
<svg style="left:709px;top:227px" width="9" height="9"><path d="M1 4.5 L3.5 7 L8 1.5" fill="none" stroke="#000" stroke-width="2"/></svg>
<div style="left:723px;top:225.23px;font-size:10.6px;line-height:12.19px;font-weight:400;color:#000;white-space:pre;">Manager 2</div>
<div style="left:713px;top:248px;width:9px;height:1px;background:repeating-linear-gradient(90deg,#7a7a7a 0 1px,transparent 1px 2px);"></div>
<div style="left:722px;top:241px;width:13px;height:13px;background:#fff;border:2px solid #7b7b7b;"></div>
<svg style="left:724px;top:243px" width="9" height="9"><path d="M1 4.5 L3.5 7 L8 1.5" fill="none" stroke="#000" stroke-width="2"/></svg>
<div style="left:738px;top:241.23px;font-size:10.6px;line-height:12.19px;font-weight:400;color:#000;white-space:pre;">Site 5</div>
<div style="left:713px;top:264px;width:9px;height:1px;background:repeating-linear-gradient(90deg,#7a7a7a 0 1px,transparent 1px 2px);"></div>
<div style="left:722px;top:257px;width:13px;height:13px;background:#fff;border:2px solid #7b7b7b;"></div>
<svg style="left:724px;top:259px" width="9" height="9"><path d="M1 4.5 L3.5 7 L8 1.5" fill="none" stroke="#000" stroke-width="2"/></svg>
<div style="left:738px;top:257.23px;font-size:10.6px;line-height:12.19px;font-weight:400;color:#000;white-space:pre;">Site 6</div>
<div style="left:713px;top:280px;width:9px;height:1px;background:repeating-linear-gradient(90deg,#7a7a7a 0 1px,transparent 1px 2px);"></div>
<div style="left:722px;top:273px;width:13px;height:13px;background:#fff;border:2px solid #7b7b7b;"></div>
<svg style="left:724px;top:275px" width="9" height="9"><path d="M1 4.5 L3.5 7 L8 1.5" fill="none" stroke="#000" stroke-width="2"/></svg>
<div style="left:738px;top:273.23px;font-size:10.6px;line-height:12.19px;font-weight:400;color:#000;white-space:pre;">Site 7</div>
<div style="left:694px;top:292px;width:8px;height:8px;border:1px solid #707070;background:#fff"></div>
<div style="left:695px;top:296px;width:6px;height:1px;background:#404040;"></div>
<div style="left:702px;top:296px;width:5px;height:1px;background:repeating-linear-gradient(90deg,#7a7a7a 0 1px,transparent 1px 2px);"></div>
<div style="left:712px;top:302px;width:1px;height:58px;background:repeating-linear-gradient(180deg,#7a7a7a 0 1px,transparent 1px 2px);"></div>
<div style="left:707px;top:289px;width:13px;height:13px;background:#fff;border:2px solid #7b7b7b;"></div>
<svg style="left:709px;top:291px" width="9" height="9"><path d="M1 4.5 L3.5 7 L8 1.5" fill="none" stroke="#000" stroke-width="2"/></svg>
<div style="left:723px;top:289.23px;font-size:10.6px;line-height:12.19px;font-weight:400;color:#000;white-space:pre;">Manager 3</div>
<div style="left:709px;top:308px;width:8px;height:8px;border:1px solid #707070;background:#fff"></div>
<div style="left:710px;top:312px;width:6px;height:1px;background:#404040;"></div>
<div style="left:717px;top:312px;width:5px;height:1px;background:repeating-linear-gradient(90deg,#7a7a7a 0 1px,transparent 1px 2px);"></div>
<div style="left:727px;top:318px;width:1px;height:26px;background:repeating-linear-gradient(180deg,#7a7a7a 0 1px,transparent 1px 2px);"></div>
<div style="left:722px;top:305px;width:13px;height:13px;background:#fff;border:2px solid #7b7b7b;"></div>
<svg style="left:724px;top:307px" width="9" height="9"><path d="M1 4.5 L3.5 7 L8 1.5" fill="none" stroke="#000" stroke-width="2"/></svg>
<div style="left:738px;top:305.23px;font-size:10.6px;line-height:12.19px;font-weight:400;color:#000;white-space:pre;">Southwest</div>
<div style="left:728px;top:328px;width:9px;height:1px;background:repeating-linear-gradient(90deg,#7a7a7a 0 1px,transparent 1px 2px);"></div>
<div style="left:737px;top:321px;width:13px;height:13px;background:#fff;border:2px solid #7b7b7b;"></div>
<svg style="left:739px;top:323px" width="9" height="9"><path d="M1 4.5 L3.5 7 L8 1.5" fill="none" stroke="#000" stroke-width="2"/></svg>
<div style="left:753px;top:321.23px;font-size:10.6px;line-height:12.19px;font-weight:400;color:#000;white-space:pre;">Site 8</div>
<div style="left:728px;top:344px;width:9px;height:1px;background:repeating-linear-gradient(90deg,#7a7a7a 0 1px,transparent 1px 2px);"></div>
<div style="left:737px;top:337px;width:13px;height:13px;background:#fff;border:2px solid #7b7b7b;"></div>
<svg style="left:739px;top:339px" width="9" height="9"><path d="M1 4.5 L3.5 7 L8 1.5" fill="none" stroke="#000" stroke-width="2"/></svg>
<div style="left:753px;top:337.23px;font-size:10.6px;line-height:12.19px;font-weight:400;color:#000;white-space:pre;">Site 9</div>
<div style="left:709px;top:356px;width:8px;height:8px;border:1px solid #707070;background:#fff"></div>
<div style="left:710px;top:360px;width:6px;height:1px;background:#404040;"></div>
<div style="left:717px;top:360px;width:5px;height:1px;background:repeating-linear-gradient(90deg,#7a7a7a 0 1px,transparent 1px 2px);"></div>
<div style="left:727px;top:366px;width:1px;height:26px;background:repeating-linear-gradient(180deg,#7a7a7a 0 1px,transparent 1px 2px);"></div>
<div style="left:722px;top:353px;width:13px;height:13px;background:#fff;border:2px solid #7b7b7b;"></div>
<svg style="left:724px;top:355px" width="9" height="9"><path d="M1 4.5 L3.5 7 L8 1.5" fill="none" stroke="#000" stroke-width="2"/></svg>
<div style="left:738px;top:353.23px;font-size:10.6px;line-height:12.19px;font-weight:400;color:#000;white-space:pre;">Northwest</div>
<div style="left:728px;top:376px;width:9px;height:1px;background:repeating-linear-gradient(90deg,#7a7a7a 0 1px,transparent 1px 2px);"></div>
<div style="left:737px;top:369px;width:13px;height:13px;background:#fff;border:2px solid #7b7b7b;"></div>
<svg style="left:739px;top:371px" width="9" height="9"><path d="M1 4.5 L3.5 7 L8 1.5" fill="none" stroke="#000" stroke-width="2"/></svg>
<div style="left:753px;top:369.23px;font-size:10.6px;line-height:12.19px;font-weight:400;color:#000;white-space:pre;">Site 10</div>
<div style="left:728px;top:392px;width:9px;height:1px;background:repeating-linear-gradient(90deg,#7a7a7a 0 1px,transparent 1px 2px);"></div>
<div style="left:737px;top:385px;width:13px;height:13px;background:#fff;border:2px solid #7b7b7b;"></div>
<svg style="left:739px;top:387px" width="9" height="9"><path d="M1 4.5 L3.5 7 L8 1.5" fill="none" stroke="#000" stroke-width="2"/></svg>
<div style="left:753px;top:385.23px;font-size:10.6px;line-height:12.19px;font-weight:400;color:#000;white-space:pre;">Site 11</div>
<div style="left:675px;top:424px;width:205px;height:225px;border:1px solid #d5dfe5;box-shadow:inset 1px 1px 0 #fff;"></div>
<div style="left:675px;top:424px;width:205px;height:225px;border-top:1px solid #a0a0a0;border-left:1px solid #a0a0a0;border-right:1px solid #a0a0a0;border-bottom:1px solid #a0a0a0;"></div>
<div style="left:685px;top:418px;width:42px;height:12px;background:#f0f0f0;"></div>
<div style="left:688.5px;top:418.86px;font-size:11px;line-height:12.65px;font-weight:400;color:#1f2d4d;white-space:pre;transform:scaleX(0.9921);transform-origin:0 0;">Months</div>
<div style="left:686px;top:439px;width:13px;height:13px;background:#fff;border-left:2px solid #8a8a8a;border-top:2px solid #8a8a8a;border-right:1px solid #dcdcdc;border-bottom:1px solid #dcdcdc;"></div>
<svg style="left:688px;top:441px" width="10" height="10"><path d="M1.5 4.5 L4 7.5 L8.5 2" fill="none" stroke="#000" stroke-width="2.2"/></svg>
<div style="left:703px;top:439.86px;font-size:11px;line-height:12.65px;font-weight:700;color:#000;white-space:pre;transform:scaleX(1.1057);transform-origin:0 0;">View/Hide All</div>
<div style="left:790px;top:439px;width:13px;height:13px;background:#fff;border-left:2px solid #8a8a8a;border-top:2px solid #8a8a8a;border-right:1px solid #dcdcdc;border-bottom:1px solid #dcdcdc;"></div>
<svg style="left:792px;top:441px" width="10" height="10"><path d="M1.5 4.5 L4 7.5 L8.5 2" fill="none" stroke="#000" stroke-width="2.2"/></svg>
<div style="left:806px;top:439.86px;font-size:11px;line-height:12.65px;font-weight:400;color:#000;white-space:pre;">September &#39;14</div>
<div style="left:686px;top:463px;width:13px;height:13px;background:#fff;border-left:2px solid #8a8a8a;border-top:2px solid #8a8a8a;border-right:1px solid #dcdcdc;border-bottom:1px solid #dcdcdc;"></div>
<svg style="left:688px;top:465px" width="10" height="10"><path d="M1.5 4.5 L4 7.5 L8.5 2" fill="none" stroke="#000" stroke-width="2.2"/></svg>
<div style="left:703px;top:463.86px;font-size:11px;line-height:12.65px;font-weight:400;color:#000;white-space:pre;">January &#39;14</div>
<div style="left:790px;top:463px;width:13px;height:13px;background:#fff;border-left:2px solid #8a8a8a;border-top:2px solid #8a8a8a;border-right:1px solid #dcdcdc;border-bottom:1px solid #dcdcdc;"></div>
<svg style="left:792px;top:465px" width="10" height="10"><path d="M1.5 4.5 L4 7.5 L8.5 2" fill="none" stroke="#000" stroke-width="2.2"/></svg>
<div style="left:806px;top:463.86px;font-size:11px;line-height:12.65px;font-weight:400;color:#000;white-space:pre;">October &#39;14</div>
<div style="left:686px;top:487px;width:13px;height:13px;background:#fff;border-left:2px solid #8a8a8a;border-top:2px solid #8a8a8a;border-right:1px solid #dcdcdc;border-bottom:1px solid #dcdcdc;"></div>
<svg style="left:688px;top:489px" width="10" height="10"><path d="M1.5 4.5 L4 7.5 L8.5 2" fill="none" stroke="#000" stroke-width="2.2"/></svg>
<div style="left:703px;top:487.86px;font-size:11px;line-height:12.65px;font-weight:400;color:#000;white-space:pre;">February &#39;14</div>
<div style="left:790px;top:487px;width:13px;height:13px;background:#fff;border-left:2px solid #8a8a8a;border-top:2px solid #8a8a8a;border-right:1px solid #dcdcdc;border-bottom:1px solid #dcdcdc;"></div>
<svg style="left:792px;top:489px" width="10" height="10"><path d="M1.5 4.5 L4 7.5 L8.5 2" fill="none" stroke="#000" stroke-width="2.2"/></svg>
<div style="left:806px;top:487.86px;font-size:11px;line-height:12.65px;font-weight:400;color:#000;white-space:pre;">November &#39;14</div>
<div style="left:686px;top:511px;width:13px;height:13px;background:#fff;border-left:2px solid #8a8a8a;border-top:2px solid #8a8a8a;border-right:1px solid #dcdcdc;border-bottom:1px solid #dcdcdc;"></div>
<svg style="left:688px;top:513px" width="10" height="10"><path d="M1.5 4.5 L4 7.5 L8.5 2" fill="none" stroke="#000" stroke-width="2.2"/></svg>
<div style="left:703px;top:511.86px;font-size:11px;line-height:12.65px;font-weight:400;color:#000;white-space:pre;">March &#39;14</div>
<div style="left:790px;top:511px;width:13px;height:13px;background:#fff;border-left:2px solid #8a8a8a;border-top:2px solid #8a8a8a;border-right:1px solid #dcdcdc;border-bottom:1px solid #dcdcdc;"></div>
<svg style="left:792px;top:513px" width="10" height="10"><path d="M1.5 4.5 L4 7.5 L8.5 2" fill="none" stroke="#000" stroke-width="2.2"/></svg>
<div style="left:806px;top:511.86px;font-size:11px;line-height:12.65px;font-weight:400;color:#000;white-space:pre;">December &#39;14</div>
<div style="left:686px;top:535px;width:13px;height:13px;background:#fff;border-left:2px solid #8a8a8a;border-top:2px solid #8a8a8a;border-right:1px solid #dcdcdc;border-bottom:1px solid #dcdcdc;"></div>
<svg style="left:688px;top:537px" width="10" height="10"><path d="M1.5 4.5 L4 7.5 L8.5 2" fill="none" stroke="#000" stroke-width="2.2"/></svg>
<div style="left:703px;top:535.86px;font-size:11px;line-height:12.65px;font-weight:400;color:#000;white-space:pre;">April &#39;14</div>
<div style="left:790px;top:535px;width:13px;height:13px;background:#fff;border-left:2px solid #8a8a8a;border-top:2px solid #8a8a8a;border-right:1px solid #dcdcdc;border-bottom:1px solid #dcdcdc;"></div>
<svg style="left:792px;top:537px" width="10" height="10"><path d="M1.5 4.5 L4 7.5 L8.5 2" fill="none" stroke="#000" stroke-width="2.2"/></svg>
<div style="left:806px;top:535.86px;font-size:11px;line-height:12.65px;font-weight:400;color:#000;white-space:pre;">January &#39;15</div>
<div style="left:686px;top:559px;width:13px;height:13px;background:#fff;border-left:2px solid #8a8a8a;border-top:2px solid #8a8a8a;border-right:1px solid #dcdcdc;border-bottom:1px solid #dcdcdc;"></div>
<svg style="left:688px;top:561px" width="10" height="10"><path d="M1.5 4.5 L4 7.5 L8.5 2" fill="none" stroke="#000" stroke-width="2.2"/></svg>
<div style="left:703px;top:559.86px;font-size:11px;line-height:12.65px;font-weight:400;color:#000;white-space:pre;">May &#39;14</div>
<div style="left:790px;top:559px;width:13px;height:13px;background:#fff;border-left:2px solid #8a8a8a;border-top:2px solid #8a8a8a;border-right:1px solid #dcdcdc;border-bottom:1px solid #dcdcdc;"></div>
<svg style="left:792px;top:561px" width="10" height="10"><path d="M1.5 4.5 L4 7.5 L8.5 2" fill="none" stroke="#000" stroke-width="2.2"/></svg>
<div style="left:806px;top:559.86px;font-size:11px;line-height:12.65px;font-weight:400;color:#000;white-space:pre;">February &#39;15</div>
<div style="left:686px;top:583px;width:13px;height:13px;background:#fff;border-left:2px solid #8a8a8a;border-top:2px solid #8a8a8a;border-right:1px solid #dcdcdc;border-bottom:1px solid #dcdcdc;"></div>
<svg style="left:688px;top:585px" width="10" height="10"><path d="M1.5 4.5 L4 7.5 L8.5 2" fill="none" stroke="#000" stroke-width="2.2"/></svg>
<div style="left:703px;top:583.86px;font-size:11px;line-height:12.65px;font-weight:400;color:#000;white-space:pre;">June &#39;14</div>
<div style="left:790px;top:583px;width:13px;height:13px;background:#fff;border-left:2px solid #8a8a8a;border-top:2px solid #8a8a8a;border-right:1px solid #dcdcdc;border-bottom:1px solid #dcdcdc;"></div>
<svg style="left:792px;top:585px" width="10" height="10"><path d="M1.5 4.5 L4 7.5 L8.5 2" fill="none" stroke="#000" stroke-width="2.2"/></svg>
<div style="left:806px;top:583.86px;font-size:11px;line-height:12.65px;font-weight:400;color:#000;white-space:pre;">March &#39;15</div>
<div style="left:686px;top:607px;width:13px;height:13px;background:#fff;border-left:2px solid #8a8a8a;border-top:2px solid #8a8a8a;border-right:1px solid #dcdcdc;border-bottom:1px solid #dcdcdc;"></div>
<svg style="left:688px;top:609px" width="10" height="10"><path d="M1.5 4.5 L4 7.5 L8.5 2" fill="none" stroke="#000" stroke-width="2.2"/></svg>
<div style="left:703px;top:607.86px;font-size:11px;line-height:12.65px;font-weight:400;color:#000;white-space:pre;">July &#39;14</div>
<div style="left:790px;top:607px;width:13px;height:13px;background:#fff;border-left:2px solid #8a8a8a;border-top:2px solid #8a8a8a;border-right:1px solid #dcdcdc;border-bottom:1px solid #dcdcdc;"></div>
<svg style="left:792px;top:609px" width="10" height="10"><path d="M1.5 4.5 L4 7.5 L8.5 2" fill="none" stroke="#000" stroke-width="2.2"/></svg>
<div style="left:806px;top:607.86px;font-size:11px;line-height:12.65px;font-weight:400;color:#000;white-space:pre;">April &#39;15</div>
<div style="left:686px;top:631px;width:13px;height:13px;background:#fff;border-left:2px solid #8a8a8a;border-top:2px solid #8a8a8a;border-right:1px solid #dcdcdc;border-bottom:1px solid #dcdcdc;"></div>
<svg style="left:688px;top:633px" width="10" height="10"><path d="M1.5 4.5 L4 7.5 L8.5 2" fill="none" stroke="#000" stroke-width="2.2"/></svg>
<div style="left:703px;top:631.86px;font-size:11px;line-height:12.65px;font-weight:400;color:#000;white-space:pre;">August &#39;14</div>
<div style="left:790px;top:631px;width:13px;height:13px;background:#fff;border-left:2px solid #8a8a8a;border-top:2px solid #8a8a8a;border-right:1px solid #dcdcdc;border-bottom:1px solid #dcdcdc;"></div>
<svg style="left:792px;top:633px" width="10" height="10"><path d="M1.5 4.5 L4 7.5 L8.5 2" fill="none" stroke="#000" stroke-width="2.2"/></svg>
<div style="left:806px;top:631.86px;font-size:11px;line-height:12.65px;font-weight:400;color:#000;white-space:pre;">May &#39;15</div>
<svg style="left:870px;top:640px" width="17" height="17"><path d="M16 2 L2 16 M16 6 L6 16 M16 10 L10 16" stroke="#8a8a8a" stroke-width="1.6"/></svg>
</body></html>
